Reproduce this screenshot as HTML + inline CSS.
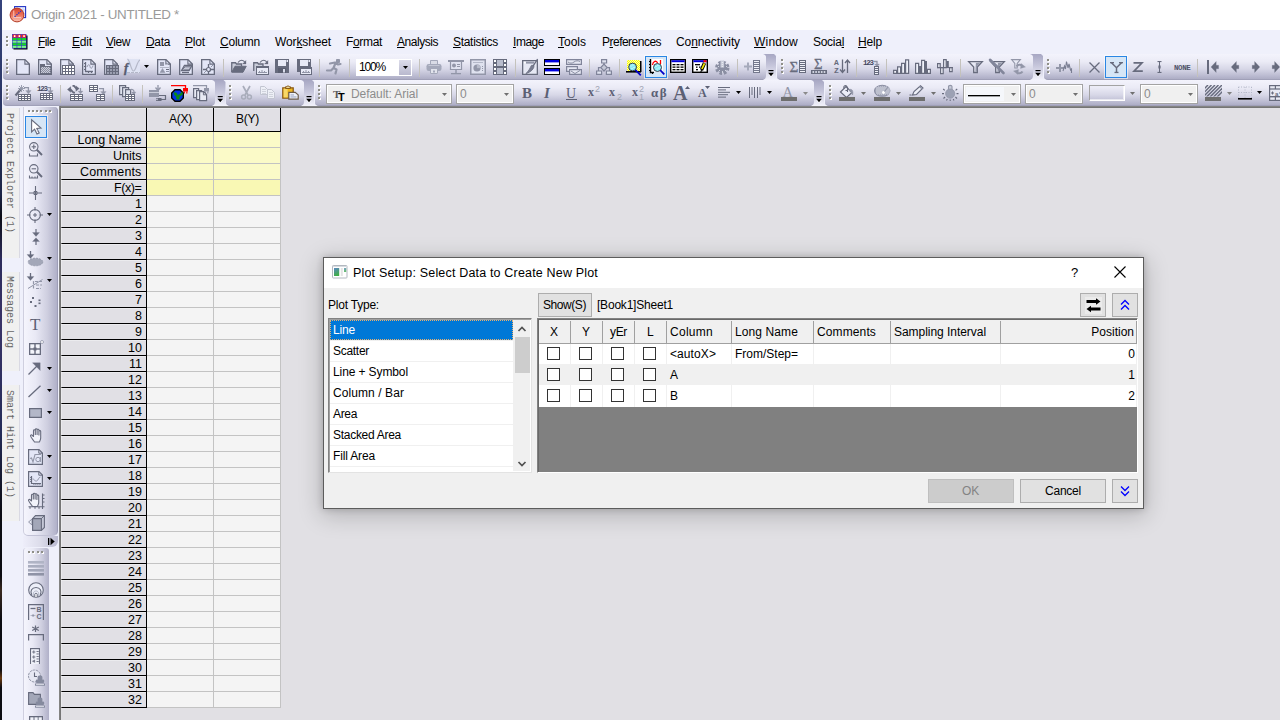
<!DOCTYPE html>
<html><head><meta charset="utf-8"><title>Origin 2021 - UNTITLED *</title>
<style>
html,body{margin:0;padding:0}
body{width:1280px;height:720px;position:relative;overflow:hidden;background:#e1e0e4;font-family:"Liberation Sans",sans-serif;font-size:12px}
div{position:absolute;box-sizing:border-box}
svg{position:absolute;overflow:visible}
.t{position:absolute;white-space:pre;line-height:normal}
u{text-decoration:underline;text-underline-offset:1px}
.tb{background:linear-gradient(#f3f3fc 0%,#ebebf6 30%,#d7d7e7 60%,#babad0 88%,#adadc5 100%);border-bottom:1px solid #a0a0b8}
.vtb{background:linear-gradient(90deg,#f5f5fd 0%,#e9e9f5 35%,#cfcfe0 70%,#b0b0c8 100%)}
.sep{width:1px;background:#b9b9c9;box-shadow:1px 0 0 #f4f4fb}
.combo{background:#f4f4f4;border:1px solid #b4b4c4;box-shadow:inset 1px 1px 0 #fff, 0 0 0 1px #e8e8f2}
</style></head>
<body>
<div style="left:0px;top:0px;width:1280px;height:30px;background:#fff"></div>
<div style="left:0px;top:30px;width:1280px;height:24px;background:#eff0fb"></div>
<div style="left:0px;top:54px;width:1280px;height:53px;background:#eff0fb"></div>
<div style="left:0px;top:107px;width:60px;height:613px;background:#eff0fb"></div>
<div style="left:0px;top:0px;width:2px;height:720px;background:linear-gradient(#36447c 0%,#2b3766 14%,#1c2546 27%,#0b0c14 30%,#2d2c5c 36%,#3a3468 45%,#242c58 60%,#0c0c12 71%,#0c0c12 80%,#3a2a20 82%,#0c0c12 86%,#0c0c12 93%,#6a3a10 94.2%,#0c0c12 95.5%,#0c0c12 100%)"></div>
<svg style="left:9px;top:5px" width="18" height="18" viewBox="0 0 18 18"><defs><linearGradient id="ag" x1="0" y1="0" x2="0" y2="1"><stop offset="0" stop-color="#d8402a"/><stop offset="0.55" stop-color="#ee7a62"/><stop offset="1" stop-color="#fbc6b8"/></linearGradient></defs><rect x="5.6" y="1.6" width="11" height="11" fill="#eef2ff" stroke="#2233c4" stroke-width="1.1"/><path d="M8 2 V12 M11 2 V12 M14 2 V12 M6 5 H16 M6 8.5 H16" stroke="#b8c4f4" stroke-width="0.7"/><circle cx="8" cy="10" r="6.9" fill="url(#ag)" stroke="#b23a24" stroke-width="1"/><path d="M4.8 5.5 V12.6 H12" stroke="#f9c9bd" stroke-width="1" fill="none"/><path d="M5.6 11.8 L12 6" stroke="#2a34c8" stroke-width="1.3" stroke-dasharray="1.4 1.1" fill="none"/></svg>
<svg style="left:12px;top:34px" width="16" height="16" viewBox="0 0 16 16"><rect x="1.5" y="1.5" width="14" height="14" fill="#000"/><rect x="0" y="0" width="14.5" height="14.5" fill="#3a46c8"/><rect x="0.6" y="0.6" width="4" height="2.9" fill="#ff2020"/><rect x="1.9" y="1.2" width="1.5" height="1.8" fill="#fff"/><rect x="5.3" y="0.6" width="4" height="2.9" fill="#ff2020"/><rect x="6.6" y="1.2" width="1.5" height="1.8" fill="#fff"/><rect x="10.0" y="0.6" width="4" height="2.9" fill="#ff2020"/><rect x="11.3" y="1.2" width="1.5" height="1.8" fill="#fff"/><rect x="0.6" y="4.1" width="4" height="2" fill="#10e018"/><rect x="0.6" y="6.699999999999999" width="4" height="2" fill="#7cf884"/><rect x="0.6" y="9.3" width="4" height="2" fill="#10e018"/><rect x="0.6" y="11.9" width="4" height="2" fill="#7cf884"/><rect x="5.3" y="4.1" width="4" height="2" fill="#10e018"/><rect x="5.3" y="6.699999999999999" width="4" height="2" fill="#7cf884"/><rect x="5.3" y="9.3" width="4" height="2" fill="#10e018"/><rect x="5.3" y="11.9" width="4" height="2" fill="#7cf884"/><rect x="10.0" y="4.1" width="4" height="2" fill="#10e018"/><rect x="10.0" y="6.699999999999999" width="4" height="2" fill="#7cf884"/><rect x="10.0" y="9.3" width="4" height="2" fill="#10e018"/><rect x="10.0" y="11.9" width="4" height="2" fill="#7cf884"/></svg>
<svg style="left:6px;top:36px" width="3" height="12" viewBox="0 0 3 12" shape-rendering="crispEdges"><rect x="1" y="1" width="2" height="2" fill="#fff"/><rect x="0" y="0" width="2" height="2" fill="#8f8f88"/><rect x="1" y="5" width="2" height="2" fill="#fff"/><rect x="0" y="4" width="2" height="2" fill="#8f8f88"/><rect x="1" y="9" width="2" height="2" fill="#fff"/><rect x="0" y="8" width="2" height="2" fill="#8f8f88"/></svg>
<span class="t" style="left:31px;top:7px;font-size:13.4px;color:#9a9a9a;letter-spacing:-0.314px;">Origin 2021 - UNTITLED *</span>
<span class="t" style="left:38px;top:35px;font-size:12px;color:#000;letter-spacing:-0.586px;"><u>F</u>ile</span>
<span class="t" style="left:72px;top:35px;font-size:12px;color:#000;letter-spacing:-0.172px;"><u>E</u>dit</span>
<span class="t" style="left:106px;top:35px;font-size:12px;color:#000;letter-spacing:-0.449px;"><u>V</u>iew</span>
<span class="t" style="left:146px;top:35px;font-size:12px;color:#000;letter-spacing:-0.34px;"><u>D</u>ata</span>
<span class="t" style="left:185px;top:35px;font-size:12px;color:#000;letter-spacing:-0.172px;"><u>P</u>lot</span>
<span class="t" style="left:220px;top:35px;font-size:12px;color:#000;letter-spacing:-0.227px;"><u>C</u>olumn</span>
<span class="t" style="left:275px;top:35px;font-size:12px;color:#000;letter-spacing:-0.127px;">Wor<u>k</u>sheet</span>
<span class="t" style="left:346px;top:35px;font-size:12px;color:#000;letter-spacing:-0.336px;">F<u>o</u>rmat</span>
<span class="t" style="left:397px;top:35px;font-size:12px;color:#000;letter-spacing:-0.461px;"><u>A</u>nalysis</span>
<span class="t" style="left:453px;top:35px;font-size:12px;color:#000;letter-spacing:-0.302px;"><u>S</u>tatistics</span>
<span class="t" style="left:513px;top:35px;font-size:12px;color:#000;letter-spacing:-0.472px;"><u>I</u>mage</span>
<span class="t" style="left:558px;top:35px;font-size:12px;color:#000;letter-spacing:-0.003px;"><u>T</u>ools</span>
<span class="t" style="left:602px;top:35px;font-size:12px;color:#000;letter-spacing:-0.518px;">P<u>r</u>eferences</span>
<span class="t" style="left:676px;top:35px;font-size:12px;color:#000;letter-spacing:-0.115px;">Co<u>n</u>nectivity</span>
<span class="t" style="left:754px;top:35px;font-size:12px;color:#000;letter-spacing:0.219px;"><u>W</u>indow</span>
<span class="t" style="left:813px;top:35px;font-size:12px;color:#000;letter-spacing:-0.281px;">Socia<u>l</u></span>
<span class="t" style="left:858px;top:35px;font-size:12px;color:#000;letter-spacing:-0.172px;"><u>H</u>elp</span>
<div class="tb" style="left:3px;top:54px;width:763px;height:26px;border-radius:0 0 3px 4px"></div>
<div class="tb" style="left:777px;top:54px;width:256px;height:26px;border-radius:0 0 3px 4px"></div>
<div class="tb" style="left:1044px;top:54px;width:246px;height:26px;border-radius:0 0 0 4px"></div>
<div class="tb" style="left:3px;top:80px;width:211.5px;height:26px;border-radius:0 0 3px 4px"></div>
<div class="tb" style="left:225.5px;top:80px;width:78.5px;height:26px;border-radius:0 0 3px 4px"></div>
<div class="tb" style="left:315px;top:80px;width:499px;height:26px;border-radius:0 0 3px 4px"></div>
<div class="tb" style="left:825px;top:80px;width:465px;height:26px;border-radius:0 0 0 4px"></div>
<svg style="left:6px;top:59px" width="3" height="16" viewBox="0 0 3 16" shape-rendering="crispEdges"><rect x="1" y="1" width="2" height="2" fill="#fff"/><rect x="0" y="0" width="2" height="2" fill="#8f8f88"/><rect x="1" y="5" width="2" height="2" fill="#fff"/><rect x="0" y="4" width="2" height="2" fill="#8f8f88"/><rect x="1" y="9" width="2" height="2" fill="#fff"/><rect x="0" y="8" width="2" height="2" fill="#8f8f88"/><rect x="1" y="13" width="2" height="2" fill="#fff"/><rect x="0" y="12" width="2" height="2" fill="#8f8f88"/></svg>
<svg style="left:16px;top:59px" width="14" height="16" viewBox="0 0 14 16"><path d="M0.65 0.65 H9 L13.35 5 V15.35 H0.65 Z" stroke="#676b7d" fill="#e3e6f7" stroke-width="1.3"/><path d="M8.9 0.9 V5.1 H13.1" stroke="#676b7d" fill="none" stroke-width="1.1"/></svg>
<svg style="left:38px;top:59px" width="14" height="16" viewBox="0 0 14 16"><path d="M0.65 0.65 H9 L13.35 5 V15.35 H0.65 Z" stroke="#676b7d" fill="#e3e6f7" stroke-width="1.3"/><path d="M8.9 0.9 V5.1 H13.1" stroke="#676b7d" fill="none" stroke-width="1.1"/><rect x="2" y="7" width="11" height="8" fill="#676b7d"/><rect x="2" y="5" width="5" height="2" fill="#676b7d"/><rect x="3" y="8" width="9" height="6" fill="#c9ccd9"/><rect x="3" y="8" width="1" height="1" fill="#8d90a2"/><rect x="5" y="8" width="1" height="1" fill="#8d90a2"/><rect x="7" y="8" width="1" height="1" fill="#8d90a2"/><rect x="9" y="8" width="1" height="1" fill="#8d90a2"/><rect x="11" y="8" width="1" height="1" fill="#8d90a2"/><rect x="4" y="9" width="1" height="1" fill="#8d90a2"/><rect x="6" y="9" width="1" height="1" fill="#8d90a2"/><rect x="8" y="9" width="1" height="1" fill="#8d90a2"/><rect x="10" y="9" width="1" height="1" fill="#8d90a2"/><rect x="12" y="9" width="1" height="1" fill="#8d90a2"/><rect x="3" y="10" width="1" height="1" fill="#8d90a2"/><rect x="5" y="10" width="1" height="1" fill="#8d90a2"/><rect x="7" y="10" width="1" height="1" fill="#8d90a2"/><rect x="9" y="10" width="1" height="1" fill="#8d90a2"/><rect x="11" y="10" width="1" height="1" fill="#8d90a2"/><rect x="4" y="11" width="1" height="1" fill="#8d90a2"/><rect x="6" y="11" width="1" height="1" fill="#8d90a2"/><rect x="8" y="11" width="1" height="1" fill="#8d90a2"/><rect x="10" y="11" width="1" height="1" fill="#8d90a2"/><rect x="12" y="11" width="1" height="1" fill="#8d90a2"/><rect x="3" y="12" width="1" height="1" fill="#8d90a2"/><rect x="5" y="12" width="1" height="1" fill="#8d90a2"/><rect x="7" y="12" width="1" height="1" fill="#8d90a2"/><rect x="9" y="12" width="1" height="1" fill="#8d90a2"/><rect x="11" y="12" width="1" height="1" fill="#8d90a2"/><rect x="4" y="13" width="1" height="1" fill="#8d90a2"/><rect x="6" y="13" width="1" height="1" fill="#8d90a2"/><rect x="8" y="13" width="1" height="1" fill="#8d90a2"/><rect x="10" y="13" width="1" height="1" fill="#8d90a2"/><rect x="12" y="13" width="1" height="1" fill="#8d90a2"/></svg>
<svg style="left:60px;top:59px" width="14" height="16" viewBox="0 0 14 16"><path d="M0.65 0.65 H9 L13.35 5 V15.35 H0.65 Z" stroke="#676b7d" fill="#e3e6f7" stroke-width="1.3"/><path d="M8.9 0.9 V5.1 H13.1" stroke="#676b7d" fill="none" stroke-width="1.1"/><rect x="2" y="6" width="13" height="10" fill="#676b7d"/><rect x="3" y="7" width="2" height="2" fill="#fff"/><rect x="3" y="10" width="2" height="2" fill="#fff"/><rect x="3" y="13" width="2" height="2" fill="#fff"/><rect x="6" y="7" width="2" height="2" fill="#fff"/><rect x="6" y="10" width="2" height="2" fill="#fff"/><rect x="6" y="13" width="2" height="2" fill="#fff"/><rect x="9" y="7" width="2" height="2" fill="#fff"/><rect x="9" y="10" width="2" height="2" fill="#fff"/><rect x="9" y="13" width="2" height="2" fill="#fff"/><rect x="12" y="7" width="2" height="2" fill="#fff"/><rect x="12" y="10" width="2" height="2" fill="#fff"/><rect x="12" y="13" width="2" height="2" fill="#fff"/></svg>
<svg style="left:82px;top:59px" width="14" height="16" viewBox="0 0 14 16"><path d="M0.65 0.65 H9 L13.35 5 V15.35 H0.65 Z" stroke="#676b7d" fill="#e3e6f7" stroke-width="1.3"/><path d="M8.9 0.9 V5.1 H13.1" stroke="#676b7d" fill="none" stroke-width="1.1"/><path d="M3.5 3 V12.5 H11" stroke="#676b7d" fill="none" stroke-width="1.3"/><rect x="2" y="4" width="2" height="1" fill="#676b7d"/><rect x="2" y="7" width="2" height="1" fill="#676b7d"/><rect x="2" y="10" width="2" height="1" fill="#676b7d"/><rect x="6" y="12" width="1" height="2" fill="#676b7d"/><rect x="9" y="12" width="1" height="2" fill="#676b7d"/><path d="M5 8 C6 5,7.5 5,8 7.5 S10 10,11 6.5" stroke="#9296a8" fill="none" stroke-width="1"/></svg>
<svg style="left:104px;top:59px" width="14" height="16" viewBox="0 0 14 16"><path d="M0.65 0.65 H9 L13.35 5 V15.35 H0.65 Z" stroke="#676b7d" fill="#e3e6f7" stroke-width="1.3"/><path d="M8.9 0.9 V5.1 H13.1" stroke="#676b7d" fill="none" stroke-width="1.1"/><rect x="2" y="6" width="13" height="10" fill="#676b7d"/><rect x="3" y="7" width="2" height="2" fill="#9a9eb0"/><rect x="3" y="10" width="2" height="2" fill="#9a9eb0"/><rect x="3" y="13" width="2" height="2" fill="#9a9eb0"/><rect x="6" y="7" width="2" height="2" fill="#9a9eb0"/><rect x="6" y="10" width="2" height="2" fill="#9a9eb0"/><rect x="6" y="13" width="2" height="2" fill="#9a9eb0"/><rect x="9" y="7" width="2" height="2" fill="#9a9eb0"/><rect x="9" y="10" width="2" height="2" fill="#9a9eb0"/><rect x="9" y="13" width="2" height="2" fill="#9a9eb0"/><rect x="12" y="7" width="2" height="2" fill="#9a9eb0"/><rect x="12" y="10" width="2" height="2" fill="#9a9eb0"/><rect x="12" y="13" width="2" height="2" fill="#9a9eb0"/></svg>
<svg style="left:124px;top:59px" width="26" height="16" viewBox="0 0 26 16"><rect x="3" y="0" width="13" height="14" fill="#dfe3f3"/><path d="M3.5 0 C6 1,7 12,9.5 12 S13 2,16 1" stroke="#b4b8c8" fill="none" stroke-width="1.2"/><path d="M3 13.5 H16" stroke="#b4b8c8" fill="none" stroke-width="1" stroke-dasharray="3 1"/><text x="0" y="13" font-family="'Liberation Serif',serif" font-style="italic" font-weight="700" font-size="12.5" fill="#565a6e" stroke="#565a6e" stroke-width="0.35">f</text><path d="M20 6 h5 l-2.5 3 z" fill="#000"/></svg>
<svg style="left:157px;top:59px" width="14" height="16" viewBox="0 0 14 16"><path d="M0.65 0.65 H9 L13.35 5 V15.35 H0.65 Z" stroke="#676b7d" fill="#e3e6f7" stroke-width="1.3"/><path d="M8.9 0.9 V5.1 H13.1" stroke="#676b7d" fill="none" stroke-width="1.1"/><rect x="3" y="3" width="4" height="4" fill="#9296a8"/><rect x="3" y="8" width="9" height="1" fill="#b4b8c8"/><path d="M3 13.5 L5.5 9.5 L8 13.5 Z" stroke="#9296a8" fill="#9296a8" stroke-width="0.5"/><rect x="9" y="10" width="3" height="1" fill="#676b7d"/><rect x="9" y="12" width="3" height="1" fill="#9296a8"/><rect x="8" y="5" width="3" height="1" fill="#b4b8c8"/></svg>
<svg style="left:179px;top:59px" width="14" height="16" viewBox="0 0 14 16"><path d="M0.65 0.65 H9 L13.35 5 V15.35 H0.65 Z" stroke="#676b7d" fill="#e3e6f7" stroke-width="1.3"/><path d="M8.9 0.9 V5.1 H13.1" stroke="#676b7d" fill="none" stroke-width="1.1"/><path d="M2.5 11.5 L5.5 6.5 H13 L10 11.5 Z" stroke="#676b7d" fill="#c5c8d8" stroke-width="1.3"/><path d="M4 10 L6.2 7.8 H11.5 M4.5 11 h6" stroke="#676b7d" fill="none" stroke-width="0.8"/><path d="M3 13.5 H10" stroke="#676b7d" fill="none" stroke-width="1.2"/></svg>
<svg style="left:201px;top:59px" width="14" height="16" viewBox="0 0 14 16"><path d="M0.65 0.65 H9 L13.35 5 V15.35 H0.65 Z" stroke="#676b7d" fill="#e3e6f7" stroke-width="1.3"/><path d="M8.9 0.9 V5.1 H13.1" stroke="#676b7d" fill="none" stroke-width="1.1"/><path d="M7.5 5 V15 M2 10.5 H13" stroke="#676b7d" fill="none" stroke-width="1.3"/><circle cx="7.5" cy="10.5" r="2" fill="#e3e6f7" stroke="#676b7d" stroke-width="1.2"/><path d="M3 14 L5 12 M10 8 L12 6" stroke="#9296a8" fill="none" stroke-width="1"/></svg>
<div style="left:223px;top:59px;width:1px;height:18px;background:#c4c2bc"></div>
<svg style="left:231px;top:59px" width="16" height="14" viewBox="0 0 16 14"><path d="M7 3.5 C9 0.5,12.5 0.5,14 3.5" stroke="#676b7d" fill="none" stroke-width="1.2"/><path d="M15 1.5 V5 H11.5 Z" stroke="#676b7d" fill="#676b7d" stroke-width="0.3"/><path d="M0.75 13 V3.75 H4.5 L5.5 5 H10.5 V7" stroke="#676b7d" fill="#c9ccd9" stroke-width="1.3"/><path d="M0.75 13.25 L4 7.25 H15.25 L12 13.25 Z" stroke="#676b7d" fill="#676b7d" stroke-width="1"/></svg>
<svg style="left:253px;top:59px" width="16" height="16" viewBox="0 0 16 16"><path d="M7 3.5 C9 0.5,12.5 0.5,14 3.5" stroke="#676b7d" fill="none" stroke-width="1.2"/><path d="M15 1.5 V5 H11.5 Z" stroke="#676b7d" fill="#676b7d" stroke-width="0.3"/><path d="M0.75 12 V3.75 H4.5 L5.5 5 H10 V7" stroke="#676b7d" fill="#c9ccd9" stroke-width="1.3"/><rect x="3" y="7" width="13" height="9" fill="#676b7d"/><rect x="4" y="9" width="11" height="6" fill="#e8eaf6"/><path d="M5 13.5 h9 M6.5 13 v-1 M9 13 v-2 M11.5 13 v-1" stroke="#9296a8" fill="none" stroke-width="1"/></svg>
<svg style="left:275px;top:59px" width="14" height="14" viewBox="0 0 14 14"><rect x="0" y="0" width="14" height="14" fill="#676b7d"/><rect x="3" y="1" width="8" height="6" fill="#e8eaf6"/><rect x="11.5" y="1" width="1.5" height="2" fill="#e8eaf6"/><rect x="3" y="9" width="8" height="5" fill="#5a5e70"/><rect x="8" y="10" width="2" height="3.5" fill="#d9dcea"/></svg>
<svg style="left:297px;top:59px" width="15" height="16" viewBox="0 0 15 16"><rect x="0" y="0" width="14" height="13" fill="#676b7d"/><rect x="3" y="1" width="8" height="6" fill="#e8eaf6"/><rect x="11.5" y="1" width="1.5" height="2" fill="#e8eaf6"/><rect x="3" y="8" width="12" height="8" fill="#676b7d"/><rect x="4" y="10" width="10" height="5" fill="#e8eaf6"/><path d="M5 13.5 h8 M6.5 13 v-1 M9 13 v-2 M11.5 13 v-1" stroke="#9296a8" fill="none" stroke-width="1"/></svg>
<div style="left:319px;top:59px;width:1px;height:18px;background:#c4c2bc"></div>
<svg style="left:326px;top:59px" width="16" height="15" viewBox="0 0 16 15"><path d="M10.5 0.5 h3 v3 h-3 z" stroke="#9296a8" fill="#9296a8" stroke-width="1"/><path d="M4 4.5 L9 3.5 L12 5.5 L14.5 5 M9.5 4 L7.5 9 L10.5 10.5 L9.5 14.5 M7.5 9 L5 11.5 H1" stroke="#9296a8" fill="none" stroke-width="2.2" stroke-linejoin="round" stroke-linecap="round"/></svg>
<div style="left:349px;top:59px;width:1px;height:18px;background:#c4c2bc"></div>
<div style="left:356px;top:59px;width:56px;height:17px;background:#fff"></div>
<div style="left:399px;top:60px;width:12px;height:15px;background:linear-gradient(#dcdcea,#b9b9ce)"></div>
<svg style="left:403px;top:66px" width="5" height="3" viewBox="0 0 5 3"><path d="M0 0 h5 l-2.5 3 z" fill="#000"/></svg>
<span class="t" style="left:359px;top:60px;font-size:12px;color:#000;letter-spacing:-1.176px;">100%</span>
<div style="left:419px;top:59px;width:1px;height:18px;background:#c4c2bc"></div>
<svg style="left:426px;top:60px" width="16" height="14" viewBox="0 0 16 14"><rect x="4" y="0" width="8" height="4" fill="#d9dbe6"/><path d="M4.5 4 V0.5 H11.5 V4" stroke="#a4a8ba" fill="none" stroke-width="1"/><rect x="0.5" y="4" width="15" height="7" rx="2.2" fill="#a4a8ba"/><rect x="2.5" y="5" width="11" height="1" fill="#c3c6d4"/><rect x="4" y="9" width="8" height="5" fill="#e1e3ec"/><path d="M4.5 9 V13.5 H11.5 V9" stroke="#a4a8ba" fill="none" stroke-width="1"/><rect x="7" y="10.5" width="2" height="2" fill="#a4a8ba"/></svg>
<svg style="left:448px;top:60px" width="16" height="15" viewBox="0 0 16 15"><rect x="0" y="0" width="16" height="2" fill="#9296a8"/><rect x="2" y="2" width="12" height="8" fill="#e0e3f0"/><path d="M2.5 2 V9.5 H13.5 V2" stroke="#9296a8" fill="none" stroke-width="1.2"/><circle cx="6" cy="5.5" r="2" fill="#9296a8"/><rect x="9" y="4" width="3" height="1" fill="#9296a8"/><rect x="9" y="6" width="3" height="1" fill="#9296a8"/><rect x="7.3" y="10" width="1.4" height="3" fill="#9296a8"/><rect x="3" y="13" width="10" height="1.3" fill="#9296a8"/></svg>
<svg style="left:470px;top:59px" width="16" height="16" viewBox="0 0 16 16"><rect x="0" y="0" width="16" height="16" fill="#9296a8"/><rect x="1.5" y="1.5" width="13" height="13" fill="#dfe2ef"/><rect x="3" y="3" width="10" height="1" fill="#b4b8c8"/><circle cx="7" cy="9" r="3.6" fill="#9296a8"/><path d="M7 9 V5.4 A3.6 3.6 0 0 1 10.6 9 Z" stroke="#b4b8c8" fill="#b8bccb" stroke-width="0.3"/><rect x="12" y="7" width="1" height="1" fill="#9296a8"/><rect x="12" y="9" width="1" height="1" fill="#9296a8"/><rect x="12" y="11" width="1" height="1" fill="#9296a8"/></svg>
<svg style="left:493px;top:59px" width="14" height="16" viewBox="0 0 14 16"><rect x="0" y="0" width="14" height="16" fill="#676b7d"/><rect x="4" y="1" width="6" height="6" fill="#b9bdcd"/><rect x="4" y="9" width="6" height="6" fill="#b9bdcd"/><rect x="1" y="1" width="2" height="2" fill="#fff"/><rect x="11" y="1" width="2" height="2" fill="#fff"/><rect x="1" y="5" width="2" height="2" fill="#fff"/><rect x="11" y="5" width="2" height="2" fill="#fff"/><rect x="1" y="9" width="2" height="2" fill="#fff"/><rect x="11" y="9" width="2" height="2" fill="#fff"/><rect x="1" y="13" width="2" height="2" fill="#fff"/><rect x="11" y="13" width="2" height="2" fill="#fff"/></svg>
<div style="left:515px;top:59px;width:1px;height:18px;background:#c4c2bc"></div>
<svg style="left:522px;top:59px" width="16" height="16" viewBox="0 0 16 16"><path d="M0.65 1.65 H15.35 V15.35 H0.65 Z" stroke="#676b7d" fill="#e6e8f4" stroke-width="1.3"/><rect x="4" y="2.6" width="8" height="2" fill="#9296a8"/><rect x="2" y="2.8" width="1.6" height="1.6" fill="#fff"/><path d="M15.6 0 L11 7.2" stroke="#676b7d" fill="none" stroke-width="1.3"/><path d="M11.8 6.4 C12.6 9,9.5 13,3.8 14.6 C6.5 12.5,7.8 9.5,9.4 6.4 Z" stroke="#676b7d" fill="#7a7e92" stroke-width="0.8"/></svg>
<svg style="left:544px;top:59px" width="16" height="16" viewBox="0 0 16 16"><rect x="0" y="0" width="16" height="7" fill="#000"/><rect x="1" y="1" width="14" height="5" fill="#fff"/><rect x="1" y="1" width="14" height="2.4" fill="#0000e0"/><rect x="0" y="9" width="16" height="7" fill="#000"/><rect x="1" y="10" width="14" height="5" fill="#fff"/><rect x="1" y="10" width="14" height="2.4" fill="#0000e0"/></svg>
<svg style="left:566px;top:59px" width="16" height="16" viewBox="0 0 16 16"><path d="M0.6 0.6 H15.4 V5.4 H0.6 Z" stroke="#80849a" fill="#e6e8f3" stroke-width="1.2"/><path d="M2 3 C4 4.5,6 4.5,8 3 S12 1.5,14 2.5" stroke="#80849a" fill="none" stroke-width="0.9"/><path d="M0.6 7.6 H11.4 V12.4 H0.6 Z" stroke="#80849a" fill="#e6e8f3" stroke-width="1.2"/><path d="M3.6 10.6 H15.4 V15.4 H3.6 Z" stroke="#80849a" fill="#e6e8f3" stroke-width="1.2"/><path d="M5 12 L9 14.5 L14 11.5" stroke="#80849a" fill="none" stroke-width="0.9"/></svg>
<div style="left:589px;top:59px;width:1px;height:18px;background:#c4c2bc"></div>
<svg style="left:596px;top:59px" width="16" height="16" viewBox="0 0 16 16"><path d="M5.6 0.6 h5 v3.4 h-5 z" stroke="#80849a" fill="#dfe2ef" stroke-width="1.2"/><path d="M8 4 V6" stroke="#80849a" fill="none" stroke-width="1.2"/><path d="M8 5.2 L11.2 8.6 L8 12 L4.8 8.6 Z" stroke="#80849a" fill="#c4c7d6" stroke-width="1.2"/><path d="M4.8 8.6 H2.5 V12 M11.2 8.6 H13.5 V12" stroke="#80849a" fill="none" stroke-width="1.2"/><path d="M0.6 12 h5 v3.4 h-5 z M10.4 12 h5 v3.4 h-5 z" stroke="#80849a" fill="#dfe2ef" stroke-width="1.2"/></svg>
<div style="left:619px;top:59px;width:1px;height:18px;background:#c4c2bc"></div>
<svg style="left:626px;top:60px" width="16" height="16" viewBox="0 0 16 16"><rect x="1" y="0" width="13" height="11" fill="#ffff00"/><rect x="1" y="0" width="1" height="1" fill="#ffffa8"/><rect x="3" y="0" width="1" height="1" fill="#ffffa8"/><rect x="5" y="0" width="1" height="1" fill="#ffffa8"/><rect x="7" y="0" width="1" height="1" fill="#ffffa8"/><rect x="9" y="0" width="1" height="1" fill="#ffffa8"/><rect x="11" y="0" width="1" height="1" fill="#ffffa8"/><rect x="13" y="0" width="1" height="1" fill="#ffffa8"/><rect x="2" y="1" width="1" height="1" fill="#ffffa8"/><rect x="4" y="1" width="1" height="1" fill="#ffffa8"/><rect x="6" y="1" width="1" height="1" fill="#ffffa8"/><rect x="8" y="1" width="1" height="1" fill="#ffffa8"/><rect x="10" y="1" width="1" height="1" fill="#ffffa8"/><rect x="12" y="1" width="1" height="1" fill="#ffffa8"/><rect x="14" y="1" width="1" height="1" fill="#ffffa8"/><rect x="1" y="2" width="1" height="1" fill="#ffffa8"/><rect x="3" y="2" width="1" height="1" fill="#ffffa8"/><rect x="5" y="2" width="1" height="1" fill="#ffffa8"/><rect x="7" y="2" width="1" height="1" fill="#ffffa8"/><rect x="9" y="2" width="1" height="1" fill="#ffffa8"/><rect x="11" y="2" width="1" height="1" fill="#ffffa8"/><rect x="13" y="2" width="1" height="1" fill="#ffffa8"/><rect x="2" y="3" width="1" height="1" fill="#ffffa8"/><rect x="4" y="3" width="1" height="1" fill="#ffffa8"/><rect x="6" y="3" width="1" height="1" fill="#ffffa8"/><rect x="8" y="3" width="1" height="1" fill="#ffffa8"/><rect x="10" y="3" width="1" height="1" fill="#ffffa8"/><rect x="12" y="3" width="1" height="1" fill="#ffffa8"/><rect x="14" y="3" width="1" height="1" fill="#ffffa8"/><rect x="1" y="4" width="1" height="1" fill="#ffffa8"/><rect x="3" y="4" width="1" height="1" fill="#ffffa8"/><rect x="5" y="4" width="1" height="1" fill="#ffffa8"/><rect x="7" y="4" width="1" height="1" fill="#ffffa8"/><rect x="9" y="4" width="1" height="1" fill="#ffffa8"/><rect x="11" y="4" width="1" height="1" fill="#ffffa8"/><rect x="13" y="4" width="1" height="1" fill="#ffffa8"/><rect x="2" y="5" width="1" height="1" fill="#ffffa8"/><rect x="4" y="5" width="1" height="1" fill="#ffffa8"/><rect x="6" y="5" width="1" height="1" fill="#ffffa8"/><rect x="8" y="5" width="1" height="1" fill="#ffffa8"/><rect x="10" y="5" width="1" height="1" fill="#ffffa8"/><rect x="12" y="5" width="1" height="1" fill="#ffffa8"/><rect x="14" y="5" width="1" height="1" fill="#ffffa8"/><rect x="1" y="6" width="1" height="1" fill="#ffffa8"/><rect x="3" y="6" width="1" height="1" fill="#ffffa8"/><rect x="5" y="6" width="1" height="1" fill="#ffffa8"/><rect x="7" y="6" width="1" height="1" fill="#ffffa8"/><rect x="9" y="6" width="1" height="1" fill="#ffffa8"/><rect x="11" y="6" width="1" height="1" fill="#ffffa8"/><rect x="13" y="6" width="1" height="1" fill="#ffffa8"/><rect x="2" y="7" width="1" height="1" fill="#ffffa8"/><rect x="4" y="7" width="1" height="1" fill="#ffffa8"/><rect x="6" y="7" width="1" height="1" fill="#ffffa8"/><rect x="8" y="7" width="1" height="1" fill="#ffffa8"/><rect x="10" y="7" width="1" height="1" fill="#ffffa8"/><rect x="12" y="7" width="1" height="1" fill="#ffffa8"/><rect x="14" y="7" width="1" height="1" fill="#ffffa8"/><rect x="1" y="8" width="1" height="1" fill="#ffffa8"/><rect x="3" y="8" width="1" height="1" fill="#ffffa8"/><rect x="5" y="8" width="1" height="1" fill="#ffffa8"/><rect x="7" y="8" width="1" height="1" fill="#ffffa8"/><rect x="9" y="8" width="1" height="1" fill="#ffffa8"/><rect x="11" y="8" width="1" height="1" fill="#ffffa8"/><rect x="13" y="8" width="1" height="1" fill="#ffffa8"/><rect x="2" y="9" width="1" height="1" fill="#ffffa8"/><rect x="4" y="9" width="1" height="1" fill="#ffffa8"/><rect x="6" y="9" width="1" height="1" fill="#ffffa8"/><rect x="8" y="9" width="1" height="1" fill="#ffffa8"/><rect x="10" y="9" width="1" height="1" fill="#ffffa8"/><rect x="12" y="9" width="1" height="1" fill="#ffffa8"/><rect x="14" y="9" width="1" height="1" fill="#ffffa8"/><rect x="1" y="10" width="1" height="1" fill="#ffffa8"/><rect x="3" y="10" width="1" height="1" fill="#ffffa8"/><rect x="5" y="10" width="1" height="1" fill="#ffffa8"/><rect x="7" y="10" width="1" height="1" fill="#ffffa8"/><rect x="9" y="10" width="1" height="1" fill="#ffffa8"/><rect x="11" y="10" width="1" height="1" fill="#ffffa8"/><rect x="13" y="10" width="1" height="1" fill="#ffffa8"/><rect x="0" y="11" width="15" height="1.6" fill="#000"/><rect x="14" y="1" width="1.5" height="11" fill="#000"/><circle cx="6.6" cy="7" r="3.9" fill="#8cecf4" stroke="#2a2a3a" stroke-width="0.9"/><path d="M4.5 6 h1 M6.5 5 h1 M7.5 7.5 h1 M5.5 8.5 h1" stroke="#e8fcff" stroke-width="1"/><path d="M9.3 9.8 L14.8 15.3" stroke="#0000c8" fill="none" stroke-width="1.8"/></svg>
<div style="left:645px;top:56px;width:22px;height:22px;background:#d6e6f6;border:1px solid #2a86e4;box-shadow:0 0 0 1px rgba(255,255,255,.55)"></div>
<svg style="left:649px;top:59px" width="16" height="16" viewBox="0 0 16 16"><rect x="2" y="0" width="12" height="13" fill="#fff"/><path d="M1.5 0 V13.5 H5" stroke="#000" fill="none" stroke-width="1.4"/><rect x="0" y="2" width="1.5" height="1" fill="#000"/><rect x="0" y="5" width="1.5" height="1" fill="#000"/><rect x="0" y="8" width="1.5" height="1" fill="#000"/><rect x="0" y="11" width="1.5" height="1" fill="#000"/><rect x="3" y="13" width="1" height="2" fill="#000"/><path d="M3.5 6 C4 2,7.5 1,8.5 4" stroke="#ff0000" fill="none" stroke-width="1.3"/><path d="M11.5 1 V5" stroke="#ff0000" fill="none" stroke-width="1.3"/><circle cx="8.5" cy="8.5" r="4" fill="#8cecf4" stroke="#2a2a3a" stroke-width="0.9"/><path d="M6.5 7.5 h1 M8.5 6.5 h1 M9.5 9 h1 M7.5 10 h1" stroke="#e8fcff" stroke-width="1"/><path d="M11.2 11.2 L15.3 15.3" stroke="#0000c8" fill="none" stroke-width="1.8"/></svg>
<svg style="left:670px;top:59px" width="16" height="14" viewBox="0 0 16 14"><rect x="0" y="0" width="16" height="14" fill="#000"/><rect x="1.4" y="1.2" width="13.2" height="11.4" fill="#fff"/><rect x="1.4" y="1.2" width="13.2" height="2" fill="#0000d8"/><rect x="2.5" y="5.0" width="3" height="1.3" fill="#000"/><rect x="6.5" y="5.0" width="3" height="1.3" fill="#000"/><rect x="10.5" y="5.0" width="3" height="1.3" fill="#000"/><rect x="2.5" y="7.5" width="3" height="1.3" fill="#000"/><rect x="6.5" y="7.5" width="3" height="1.3" fill="#000"/><rect x="10.5" y="7.5" width="3" height="1.3" fill="#000"/><rect x="2.5" y="10.0" width="3" height="1.3" fill="#000"/><rect x="6.5" y="10.0" width="3" height="1.3" fill="#000"/><rect x="10.5" y="10.0" width="3" height="1.3" fill="#000"/></svg>
<svg style="left:692px;top:59px" width="16" height="14" viewBox="0 0 16 14"><rect x="0" y="0" width="16" height="14" fill="#000"/><rect x="1.4" y="1.2" width="13.2" height="11.4" fill="#fff"/><rect x="1.4" y="1.2" width="13.2" height="2" fill="#0000d8"/><rect x="11.5" y="1.2" width="3" height="2" fill="#ff0000"/><rect x="3" y="5" width="5" height="1.3" fill="#000"/><rect x="4" y="7.5" width="1.5" height="1.3" fill="#000"/><rect x="7" y="7.5" width="1.5" height="1.3" fill="#000"/><rect x="4" y="10" width="2" height="1.3" fill="#000"/><path d="M12.5 4 L9.5 11" stroke="#000" fill="none" stroke-width="3.4"/><path d="M12.5 4.3 L9.9 10" stroke="#f4e800" fill="none" stroke-width="1.7"/><path d="M9.3 11 L8.6 13 L10.3 11.6 Z" stroke="#000" fill="#000" stroke-width="0.5"/></svg>
<svg style="left:714px;top:60px" width="17" height="15" viewBox="0 0 17 15"><circle cx="8.3" cy="7.8" r="5.6" fill="none" stroke="#8a8ea2" stroke-width="3.2" stroke-dasharray="2.6 1.8"/><circle cx="8.3" cy="7.8" r="5" fill="#8a8ea2"/><rect x="6.5" y="0.6" width="3.6" height="7" fill="#c9ccd9"/><rect x="7.8" y="2" width="1" height="1" fill="#eef0f6"/><rect x="7.8" y="4" width="1" height="1" fill="#eef0f6"/><rect x="7.8" y="6" width="1" height="1" fill="#eef0f6"/><rect x="4" y="6" width="1" height="1" fill="#d4d7e2"/><rect x="12" y="6" width="1" height="1" fill="#d4d7e2"/><rect x="5" y="10" width="1" height="1" fill="#d4d7e2"/><rect x="11" y="10" width="1" height="1" fill="#d4d7e2"/><rect x="8" y="11" width="1" height="2" fill="#d4d7e2"/></svg>
<div style="left:737px;top:59px;width:1px;height:18px;background:#c4c2bc"></div>
<svg style="left:744px;top:60px" width="16" height="14" viewBox="0 0 16 14"><rect x="0" y="5.5" width="8" height="2" fill="#a6aabb"/><rect x="3" y="2.5" width="2" height="8" fill="#a6aabb"/><rect x="9" y="0" width="7" height="13" fill="#74788c" shape-rendering="crispEdges"/><rect x="10" y="1" width="5" height="1" fill="#f0f1f8" shape-rendering="crispEdges"/><rect x="10" y="3" width="5" height="1" fill="#f0f1f8" shape-rendering="crispEdges"/><rect x="10" y="5" width="5" height="1" fill="#f0f1f8" shape-rendering="crispEdges"/><rect x="10" y="7" width="5" height="1" fill="#f0f1f8" shape-rendering="crispEdges"/><rect x="10" y="9" width="5" height="1" fill="#f0f1f8" shape-rendering="crispEdges"/><rect x="10" y="11" width="5" height="1" fill="#f0f1f8" shape-rendering="crispEdges"/></svg>
<svg style="left:763px;top:54px" width="16" height="26" viewBox="0 0 16 26"><defs><linearGradient id="cg766_54" x1="0" y1="0" x2="0" y2="1"><stop offset="0" stop-color="#a7a7c3"/><stop offset="0.45" stop-color="#c6c6db"/><stop offset="1" stop-color="#f2f2fb"/></linearGradient></defs><path d="M0 0 H11 L13 2 V22 C13 24,14 25,16 26 H0 C2 25,3 24,3 22 V3 C3 1.5,2 0.5,0 0 Z" fill="url(#cg766_54)"/><path d="M5.5 20 h5 l-2.5 3.6 z" fill="#fff" opacity=".8"/><rect x="5.5" y="16" width="5" height="1.2" fill="#000"/><path d="M5.2 18.8 h5.6 l-2.8 3.4 z" fill="#000"/></svg>
<svg style="left:781px;top:59px" width="3" height="16" viewBox="0 0 3 16" shape-rendering="crispEdges"><rect x="1" y="1" width="2" height="2" fill="#fff"/><rect x="0" y="0" width="2" height="2" fill="#8f8f88"/><rect x="1" y="5" width="2" height="2" fill="#fff"/><rect x="0" y="4" width="2" height="2" fill="#8f8f88"/><rect x="1" y="9" width="2" height="2" fill="#fff"/><rect x="0" y="8" width="2" height="2" fill="#8f8f88"/><rect x="1" y="13" width="2" height="2" fill="#fff"/><rect x="0" y="12" width="2" height="2" fill="#8f8f88"/></svg>
<svg style="left:790px;top:60px" width="16" height="14" viewBox="0 0 16 14"><text x="-0.5" y="11.8" font-family="'Liberation Serif',serif" font-size="15" fill="#676b7d" stroke="#676b7d" stroke-width="0.3">Σ</text><rect x="9" y="0" width="7" height="13" fill="#676b7d" shape-rendering="crispEdges"/><rect x="10" y="1" width="5" height="1" fill="#f0f1f8" shape-rendering="crispEdges"/><rect x="10" y="3" width="5" height="1" fill="#f0f1f8" shape-rendering="crispEdges"/><rect x="10" y="5" width="5" height="1" fill="#f0f1f8" shape-rendering="crispEdges"/><rect x="10" y="7" width="5" height="1" fill="#f0f1f8" shape-rendering="crispEdges"/><rect x="10" y="9" width="5" height="1" fill="#f0f1f8" shape-rendering="crispEdges"/><rect x="10" y="11" width="5" height="1" fill="#f0f1f8" shape-rendering="crispEdges"/></svg>
<svg style="left:811px;top:59px" width="16" height="15" viewBox="0 0 16 15"><text x="3" y="9.8" font-family="'Liberation Serif',serif" font-size="14.5" fill="#676b7d" stroke="#676b7d" stroke-width="0.3">Σ</text><rect x="0" y="11" width="16" height="4" fill="#676b7d"/><rect x="1.5" y="12.2" width="1.6" height="1.6" fill="#eceef8"/><rect x="4.3" y="12.2" width="1.6" height="1.6" fill="#eceef8"/><rect x="7.1" y="12.2" width="1.6" height="1.6" fill="#eceef8"/><rect x="9.899999999999999" y="12.2" width="1.6" height="1.6" fill="#eceef8"/><rect x="12.7" y="12.2" width="1.6" height="1.6" fill="#eceef8"/></svg>
<svg style="left:834px;top:59px" width="16" height="15" viewBox="0 0 16 15"><text x="0" y="6" font-family="'Liberation Mono',monospace" font-weight="700" font-size="8" fill="#676b7d">A</text><text x="0" y="14" font-family="'Liberation Mono',monospace" font-weight="700" font-size="8" fill="#676b7d">Z</text><path d="M8.5 0.5 V13 M6 10.5 L8.5 13.5 L11 10.5" stroke="#676b7d" fill="none" stroke-width="1.3"/><path d="M13.5 14 V1.5 M11 4 L13.5 1 L16 4" stroke="#676b7d" fill="none" stroke-width="1.3"/></svg>
<div style="left:856px;top:59px;width:1px;height:18px;background:#c4c2bc"></div>
<svg style="left:863px;top:59px" width="17" height="15" viewBox="0 0 17 15"><text x="0" y="5.5" font-family="'Liberation Mono',monospace" font-weight="700" font-size="7.5" fill="#444860" letter-spacing="-1.2">123</text><path d="M10.5 2.5 H14 V6" stroke="#9296a8" fill="none" stroke-width="1.3"/><path d="M11.5 5 H16.5 L14 8 Z" stroke="#9296a8" fill="#9296a8" stroke-width="0.2"/><rect x="11" y="7" width="5" height="9" fill="#676b7d" shape-rendering="crispEdges"/><rect x="12" y="8" width="3" height="1" fill="#f0f1f8" shape-rendering="crispEdges"/><rect x="12" y="10" width="3" height="1" fill="#f0f1f8" shape-rendering="crispEdges"/><rect x="12" y="12" width="3" height="1" fill="#f0f1f8" shape-rendering="crispEdges"/><rect x="12" y="14" width="3" height="1" fill="#f0f1f8" shape-rendering="crispEdges"/></svg>
<div style="left:886px;top:59px;width:1px;height:18px;background:#c4c2bc"></div>
<svg style="left:893px;top:59px" width="16" height="15" viewBox="0 0 16 15"><path d="M0.6 14.4 V11.4 h3 V14.4 Z" stroke="#676b7d" fill="#f0f2fa" stroke-width="1.2"/><path d="M4.6 14.4 V7.9 h3 V14.4 Z" stroke="#676b7d" fill="#f0f2fa" stroke-width="1.2"/><path d="M8.6 14.4 V4.4 h3 V14.4 Z" stroke="#676b7d" fill="#f0f2fa" stroke-width="1.2"/><path d="M12.6 14.4 V0.9000000000000004 h3 V14.4 Z" stroke="#676b7d" fill="#f0f2fa" stroke-width="1.2"/></svg>
<svg style="left:915px;top:59px" width="16" height="15" viewBox="0 0 16 15"><path d="M0.6 14.4 V4.4 h3 V14.4 Z" stroke="#676b7d" fill="#f0f2fa" stroke-width="1.2"/><rect x="3.6" y="7" width="2.4" height="8" fill="#676b7d"/><path d="M6.6 14.4 V1.4 h3 V14.4 Z" stroke="#676b7d" fill="#f0f2fa" stroke-width="1.2"/><rect x="9.6" y="2" width="2.4" height="13" fill="#676b7d"/><path d="M12.4 14.4 V10.4 h3 V14.4 Z" stroke="#676b7d" fill="#f0f2fa" stroke-width="1.2"/></svg>
<svg style="left:937px;top:59px" width="16" height="15" viewBox="0 0 16 15"><path d="M0.6 4.6 h2.6 v4 h-2.6 z" stroke="#676b7d" fill="#f0f2fa" stroke-width="1.2"/><path d="M3.6 8.6 h2.6 v6 h-2.6 z" stroke="#676b7d" fill="#f0f2fa" stroke-width="1.2"/><path d="M6.6 0.6 h2.6 v8 h-2.6 z" stroke="#676b7d" fill="#f0f2fa" stroke-width="1.2"/><rect x="9.4" y="2" width="2.4" height="7" fill="#676b7d"/><path d="M12.6 8.6 h2.6 v4 h-2.6 z" stroke="#676b7d" fill="#f0f2fa" stroke-width="1.2"/><path d="M0 8.6 H16" stroke="#676b7d" fill="none" stroke-width="1"/></svg>
<div style="left:960px;top:59px;width:1px;height:18px;background:#c4c2bc"></div>
<svg style="left:968px;top:61px" width="15" height="13" viewBox="0 0 15 13"><path d="M0.7 0.7 H14.3 L9.3 6 V11.5 H5.7 V6 Z" stroke="#676b7d" fill="#e8eaf5" stroke-width="1.3"/><path d="M8 2 L12.5 1.5 L9 5.5 V10.5 H7.5 Z" stroke="#9296a8" fill="#9296a8" stroke-width="0.2"/></svg>
<svg style="left:989px;top:59px" width="16" height="15" viewBox="0 0 16 15"><g transform="translate(1,2)"><path d="M0.7 0.7 H14.3 L9.3 6 V11.5 H5.7 V6 Z" stroke="#676b7d" fill="#e8eaf5" stroke-width="1.3"/><path d="M8 2 L12.5 1.5 L9 5.5 V10.5 H7.5 Z" stroke="#9296a8" fill="#9296a8" stroke-width="0.2"/></g><path d="M1 0.8 L14.5 14" stroke="#82869b" fill="none" stroke-width="2.6" stroke-linecap="round"/></svg>
<svg style="left:1011px;top:59px" width="16" height="16" viewBox="0 0 16 16"><path d="M0.6 0.6 H9.4 L6.2 4.5 V9 H3.8 V4.5 Z" stroke="#9296a8" fill="#e8eaf5" stroke-width="1.1"/><path d="M5.5 7.5 C6.5 5.5,10 5,11.5 7" stroke="#9296a8" fill="none" stroke-width="2"/><path d="M10 4.5 L14.5 8 L9.5 9.5 Z" stroke="#9296a8" fill="#9296a8" stroke-width="0.3"/><path d="M11.5 12.5 C10.5 14.5,7 15,5.5 13" stroke="#9296a8" fill="none" stroke-width="2"/><path d="M7 15.5 L2.5 12 L7.5 10.5 Z" stroke="#9296a8" fill="#9296a8" stroke-width="0.3"/></svg>
<svg style="left:1030px;top:54px" width="16" height="26" viewBox="0 0 16 26"><defs><linearGradient id="cg1033_54" x1="0" y1="0" x2="0" y2="1"><stop offset="0" stop-color="#a7a7c3"/><stop offset="0.45" stop-color="#c6c6db"/><stop offset="1" stop-color="#f2f2fb"/></linearGradient></defs><path d="M0 0 H11 L13 2 V22 C13 24,14 25,16 26 H0 C2 25,3 24,3 22 V3 C3 1.5,2 0.5,0 0 Z" fill="url(#cg1033_54)"/><path d="M5.5 20 h5 l-2.5 3.6 z" fill="#fff" opacity=".8"/><rect x="5.5" y="16" width="5" height="1.2" fill="#000"/><path d="M5.2 18.8 h5.6 l-2.8 3.4 z" fill="#000"/></svg>
<svg style="left:1047px;top:59px" width="3" height="16" viewBox="0 0 3 16" shape-rendering="crispEdges"><rect x="1" y="1" width="2" height="2" fill="#fff"/><rect x="0" y="0" width="2" height="2" fill="#8f8f88"/><rect x="1" y="5" width="2" height="2" fill="#fff"/><rect x="0" y="4" width="2" height="2" fill="#8f8f88"/><rect x="1" y="9" width="2" height="2" fill="#fff"/><rect x="0" y="8" width="2" height="2" fill="#8f8f88"/><rect x="1" y="13" width="2" height="2" fill="#fff"/><rect x="0" y="12" width="2" height="2" fill="#8f8f88"/></svg>
<svg style="left:1056px;top:61px" width="17" height="13" viewBox="0 0 17 13"><rect x="0" y="6" width="8" height="2" fill="#9296a8"/><rect x="3" y="3" width="2" height="8" fill="#9296a8"/><path d="M7 10 L8.5 5 L9.5 8 L10.5 0.5 L12 7 L13 3 L14.5 9 L15.5 8 V12" stroke="#7a7e92" fill="none" stroke-width="1.1"/></svg>
<div style="left:1079px;top:59px;width:1px;height:18px;background:#c4c2bc"></div>
<svg style="left:1089px;top:62px" width="11" height="11" viewBox="0 0 11 11"><path d="M0.5 0.5 L10.5 10.5 M10.5 0.5 L0.5 10.5" stroke="#676b7d" fill="none" stroke-width="1.3"/></svg>
<div style="left:1105px;top:56px;width:22px;height:22px;background:#d6e6f6;border:1px solid #2a86e4;box-shadow:0 0 0 1px rgba(255,255,255,.55)"></div>
<svg style="left:1110px;top:62px" width="13" height="11" viewBox="0 0 13 11"><path d="M1.5 0.7 L6.5 5.8 L11.5 0.7 M6.5 5.8 V10.3" stroke="#676b7d" fill="none" stroke-width="1.5"/><rect x="0" y="0" width="4" height="1.3" fill="#676b7d"/><rect x="9" y="0" width="4" height="1.3" fill="#676b7d"/><rect x="4.5" y="9.8" width="4" height="1.3" fill="#676b7d"/></svg>
<svg style="left:1133px;top:62px" width="10" height="10" viewBox="0 0 10 10"><path d="M0.5 0.8 H9 L1 9.2 H9.8" stroke="#676b7d" fill="none" stroke-width="1.7" stroke-linejoin="miter"/></svg>
<svg style="left:1157px;top:61px" width="5" height="12" viewBox="0 0 5 12"><rect x="0.5" y="0" width="4" height="1.1" fill="#676b7d"/><rect x="0.5" y="10.9" width="4" height="1.1" fill="#676b7d"/><rect x="2" y="0" width="1" height="12" fill="#676b7d"/><rect x="1.4" y="4.5" width="2.2" height="3" fill="#676b7d"/></svg>
<span class="t" style="left:1174px;top:63.5px;font-size:7.5px;color:#50546a;font-family:'Liberation Mono', monospace;font-weight:700;letter-spacing:-0.379px;">NONE</span>
<div style="left:1197px;top:59px;width:1px;height:18px;background:#c4c2bc"></div>
<svg style="left:1207px;top:60px" width="12" height="14" viewBox="0 0 12 14"><rect x="0" y="0" width="2" height="14" fill="#676b7d"/><path d="M4 7 L9.2 1.4 V5.2 H11.6 V8.8 H9.2 V12.6 Z" stroke="#676b7d" fill="#676b7d" stroke-width="0.2"/></svg>
<svg style="left:1231px;top:61px" width="8" height="12" viewBox="0 0 8 12"><path d="M0.2 6 L5.4 0.4 V4.2 H7.8 V7.8 H5.4 V11.6 Z" stroke="#676b7d" fill="#676b7d" stroke-width="0.2"/></svg>
<svg style="left:1252px;top:61px" width="8" height="12" viewBox="0 0 8 12"><path d="M7.8 6 L2.6 0.4 V4.2 H0.2 V7.8 H2.6 V11.6 Z" stroke="#676b7d" fill="#676b7d" stroke-width="0.2"/></svg>
<svg style="left:1272px;top:61px" width="8" height="12" viewBox="0 0 8 12"><path d="M7.8 6 L2.6 0.4 V4.2 H0.2 V7.8 H2.6 V11.6 Z" stroke="#676b7d" fill="#676b7d" stroke-width="0.2"/></svg>
<svg style="left:6px;top:85px" width="3" height="16" viewBox="0 0 3 16" shape-rendering="crispEdges"><rect x="1" y="1" width="2" height="2" fill="#fff"/><rect x="0" y="0" width="2" height="2" fill="#8f8f88"/><rect x="1" y="5" width="2" height="2" fill="#fff"/><rect x="0" y="4" width="2" height="2" fill="#8f8f88"/><rect x="1" y="9" width="2" height="2" fill="#fff"/><rect x="0" y="8" width="2" height="2" fill="#8f8f88"/><rect x="1" y="13" width="2" height="2" fill="#fff"/><rect x="0" y="12" width="2" height="2" fill="#8f8f88"/></svg>
<svg style="left:15px;top:85px" width="17" height="16" viewBox="0 0 17 16"><path d="M0.5 10.5 L6 4" stroke="#676b7d" fill="none" stroke-width="2.2"/><path d="M6.5 0 V7 M3 3.5 H10 M4 1 L9 6 M9 1 L4 6" stroke="#9296a8" fill="none" stroke-width="0.9"/><path d="M9 2.6 H13.4 V6" stroke="#9296a8" fill="none" stroke-width="1.3"/><path d="M10.6 5.5 H16.2 L13.4 9 Z" stroke="#9296a8" fill="#9296a8" stroke-width="0.2"/><rect x="3" y="9" width="13" height="7" fill="#676b7d"/><rect x="4" y="10" width="2" height="1" fill="#fff"/><rect x="4" y="12" width="2" height="1" fill="#fff"/><rect x="4" y="14" width="2" height="1" fill="#fff"/><rect x="7" y="10" width="2" height="1" fill="#fff"/><rect x="7" y="12" width="2" height="1" fill="#fff"/><rect x="7" y="14" width="2" height="1" fill="#fff"/><rect x="10" y="10" width="2" height="1" fill="#fff"/><rect x="10" y="12" width="2" height="1" fill="#fff"/><rect x="10" y="14" width="2" height="1" fill="#fff"/><rect x="13" y="10" width="2" height="1" fill="#fff"/><rect x="13" y="12" width="2" height="1" fill="#fff"/><rect x="13" y="14" width="2" height="1" fill="#fff"/></svg>
<svg style="left:37px;top:85px" width="17" height="16" viewBox="0 0 17 16"><text x="0" y="5.5" font-family="'Liberation Mono',monospace" font-weight="700" font-size="7.5" fill="#444860" letter-spacing="-1.2">123</text><path d="M9 2.6 H13.4 V6" stroke="#9296a8" fill="none" stroke-width="1.3"/><path d="M10.6 5.5 H16.2 L13.4 9 Z" stroke="#9296a8" fill="#9296a8" stroke-width="0.2"/><rect x="3" y="8" width="13" height="7" fill="#676b7d"/><rect x="4" y="9" width="2" height="1" fill="#fff"/><rect x="4" y="11" width="2" height="1" fill="#fff"/><rect x="4" y="13" width="2" height="1" fill="#fff"/><rect x="7" y="9" width="2" height="1" fill="#fff"/><rect x="7" y="11" width="2" height="1" fill="#fff"/><rect x="7" y="13" width="2" height="1" fill="#fff"/><rect x="10" y="9" width="2" height="1" fill="#fff"/><rect x="10" y="11" width="2" height="1" fill="#fff"/><rect x="10" y="13" width="2" height="1" fill="#fff"/><rect x="13" y="9" width="2" height="1" fill="#fff"/><rect x="13" y="11" width="2" height="1" fill="#fff"/><rect x="13" y="13" width="2" height="1" fill="#fff"/></svg>
<div style="left:60px;top:85px;width:1px;height:18px;background:#c4c2bc"></div>
<svg style="left:67px;top:85px" width="17" height="16" viewBox="0 0 17 16"><path d="M0.3 4.5 L3.8 1.6 V7.4 Z" stroke="#676b7d" fill="#676b7d" stroke-width="0.2"/><path d="M3 4 L6.5 7.6 H8" stroke="#676b7d" fill="none" stroke-width="1.8"/><path d="M12.3 3.6 L8.8 0.7 V6.5 Z" stroke="#676b7d" fill="#676b7d" stroke-width="0.2"/><path d="M5.5 0.9 H7 L9.6 4" stroke="#676b7d" fill="none" stroke-width="1.8"/><path d="M13.5 3 V7" stroke="#9296a8" fill="none" stroke-width="1.2"/><path d="M11 6 H16 L13.5 9 Z" stroke="#9296a8" fill="#9296a8" stroke-width="0.2"/><rect x="3" y="9" width="13" height="7" fill="#676b7d"/><rect x="4" y="10" width="3" height="1" fill="#fff"/><rect x="4" y="12" width="3" height="1" fill="#fff"/><rect x="4" y="14" width="3" height="1" fill="#fff"/><rect x="8" y="10" width="3" height="1" fill="#fff"/><rect x="8" y="12" width="3" height="1" fill="#fff"/><rect x="8" y="14" width="3" height="1" fill="#fff"/><rect x="12" y="10" width="3" height="1" fill="#fff"/><rect x="12" y="12" width="3" height="1" fill="#fff"/><rect x="12" y="14" width="3" height="1" fill="#fff"/></svg>
<svg style="left:89px;top:85px" width="17" height="16" viewBox="0 0 17 16"><rect x="0" y="0" width="9" height="7" fill="#676b7d"/><rect x="1" y="1" width="3" height="1" fill="#fff"/><rect x="1" y="3" width="3" height="1" fill="#fff"/><rect x="1" y="5" width="3" height="1" fill="#fff"/><rect x="5" y="1" width="3" height="1" fill="#fff"/><rect x="5" y="3" width="3" height="1" fill="#fff"/><rect x="5" y="5" width="3" height="1" fill="#fff"/><path d="M10 3.6 H14.4 V7" stroke="#9296a8" fill="none" stroke-width="1.3"/><path d="M11.6 6.5 H17.2 L14.4 10 Z" stroke="#9296a8" fill="#9296a8" stroke-width="0.2"/><rect x="7" y="9" width="9" height="7" fill="#676b7d"/><rect x="8" y="10" width="3" height="1" fill="#fff"/><rect x="8" y="12" width="3" height="1" fill="#fff"/><rect x="8" y="14" width="3" height="1" fill="#fff"/><rect x="12" y="10" width="3" height="1" fill="#fff"/><rect x="12" y="12" width="3" height="1" fill="#fff"/><rect x="12" y="14" width="3" height="1" fill="#fff"/></svg>
<div style="left:112px;top:85px;width:1px;height:18px;background:#c4c2bc"></div>
<svg style="left:119px;top:85px" width="17" height="16" viewBox="0 0 17 16"><path d="M0.6 0.6 h6 v9 h-6 z" stroke="#676b7d" fill="#dfe2ee" stroke-width="1.2"/><path d="M3.6 2.6 h6 v9 h-6 z" stroke="#676b7d" fill="#dfe2ee" stroke-width="1.2"/><path d="M6.6 4.6 h5 v9 h-5 z" stroke="#676b7d" fill="#dfe2ee" stroke-width="1.2"/><path d="M11 5 C13 3.5,15.5 5,15 7.5" stroke="#9296a8" fill="none" stroke-width="1.2"/><path d="M12.5 7 H17 L14.8 10 Z" stroke="#9296a8" fill="#9296a8" stroke-width="0.2"/><rect x="6" y="9" width="10" height="7" fill="#676b7d"/><rect x="7" y="10" width="2" height="1" fill="#fff"/><rect x="7" y="12" width="2" height="1" fill="#fff"/><rect x="7" y="14" width="2" height="1" fill="#fff"/><rect x="10" y="10" width="2" height="1" fill="#fff"/><rect x="10" y="12" width="2" height="1" fill="#fff"/><rect x="10" y="14" width="2" height="1" fill="#fff"/><rect x="13" y="10" width="2" height="1" fill="#fff"/><rect x="13" y="12" width="2" height="1" fill="#fff"/><rect x="13" y="14" width="2" height="1" fill="#fff"/></svg>
<div style="left:142px;top:85px;width:1px;height:18px;background:#c4c2bc"></div>
<svg style="left:149px;top:85px" width="17" height="16" viewBox="0 0 17 16"><path d="M9 0 V4.5 M6.5 2.5 L9 5.5 L11.5 2.5" stroke="#9296a8" fill="none" stroke-width="1.3"/><rect x="0" y="5" width="10" height="7" fill="#9296a8"/><rect x="0" y="7" width="10" height="1" fill="#c9ccd9"/><path d="M10 10.5 H16.5 V14.5 H12" stroke="#676b7d" fill="none" stroke-width="1.2"/><rect x="9" y="13" width="3.5" height="3" fill="#676b7d"/><rect x="7" y="13.3" width="2" height="0.9" fill="#676b7d"/><rect x="7" y="15" width="2" height="0.9" fill="#676b7d"/></svg>
<svg style="left:171px;top:85px" width="17" height="17" viewBox="0 0 17 17"><path d="M0 0.6 H14.5 V4" stroke="#ff0000" fill="none" stroke-width="1.3"/><rect x="12" y="3" width="5" height="3.5" fill="#ff0000"/><rect x="12.7" y="6.5" width="1.2" height="2" fill="#ff0000"/><rect x="15.2" y="6.5" width="1.2" height="2" fill="#ff0000"/><path d="M4 4.7 H9 L12.3 8 V13 L9 16.3 H4 L0.7 13 V8 Z" stroke="#000" fill="#0033e6" stroke-width="1.4"/><path d="M3 7.5 L5.5 8 L6.5 10.5 L9 9 L11 7 L11.5 9.5 L8.5 11.5 L8 14.5 L5.5 14 L5.5 11.5 L3.5 10 Z" stroke="#0a8a16" fill="#0a8a16" stroke-width="0.5"/></svg>
<svg style="left:193px;top:85px" width="17" height="16" viewBox="0 0 17 16"><path d="M0 0.6 H13.5 V3" stroke="#9296a8" fill="none" stroke-width="1.2"/><rect x="11" y="3" width="5" height="3.5" fill="#9296a8"/><rect x="11.7" y="6.5" width="1.2" height="2" fill="#9296a8"/><rect x="14.2" y="6.5" width="1.2" height="2" fill="#9296a8"/><path d="M0.6 3.6 h5 v9 h-5 z" stroke="#676b7d" fill="#e8eaf4" stroke-width="1.2"/><path d="M3.6 5.6 h5 v9 h-5 z" stroke="#676b7d" fill="#e8eaf4" stroke-width="1.2"/><path d="M6.6 6.6 h4 l3 3 v6 h-7 z" stroke="#676b7d" fill="#e8eaf4" stroke-width="1.2"/><path d="M10.4 6.8 v3 h3" stroke="#676b7d" fill="none" stroke-width="1"/></svg>
<svg style="left:211.5px;top:80px" width="16.5" height="26" viewBox="0 0 16.5 26"><defs><linearGradient id="cg214.5_80" x1="0" y1="0" x2="0" y2="1"><stop offset="0" stop-color="#a7a7c3"/><stop offset="0.45" stop-color="#c6c6db"/><stop offset="1" stop-color="#f2f2fb"/></linearGradient></defs><path d="M0 0 H11.5 L13.5 2 V22 C13.5 24,14.5 25,16.5 26 H0 C2 25,3 24,3 22 V3 C3 1.5,2 0.5,0 0 Z" fill="url(#cg214.5_80)"/><path d="M5.75 20 h5 l-2.5 3.6 z" fill="#fff" opacity=".8"/><rect x="5.75" y="16" width="5" height="1.2" fill="#000"/><path d="M5.45 18.8 h5.6 l-2.8 3.4 z" fill="#000"/></svg>
<svg style="left:229px;top:85px" width="3" height="16" viewBox="0 0 3 16" shape-rendering="crispEdges"><rect x="1" y="1" width="2" height="2" fill="#fff"/><rect x="0" y="0" width="2" height="2" fill="#8f8f88"/><rect x="1" y="5" width="2" height="2" fill="#fff"/><rect x="0" y="4" width="2" height="2" fill="#8f8f88"/><rect x="1" y="9" width="2" height="2" fill="#fff"/><rect x="0" y="8" width="2" height="2" fill="#8f8f88"/><rect x="1" y="13" width="2" height="2" fill="#fff"/><rect x="0" y="12" width="2" height="2" fill="#8f8f88"/></svg>
<svg style="left:241px;top:86px" width="11" height="14" viewBox="0 0 11 14"><path d="M2 0 L7 9 M9 0 L4 9" stroke="#a9adbb" fill="none" stroke-width="1.7"/><circle cx="2.6" cy="11" r="2" fill="none" stroke="#a9adbb" stroke-width="1.5"/><circle cx="8.4" cy="11" r="2" fill="none" stroke="#a9adbb" stroke-width="1.5"/></svg>
<svg style="left:260px;top:86px" width="16" height="13" viewBox="0 0 16 13"><path d="M0.5 0.5 h4 l3 3 v5 h-7 z" stroke="#c2c5d1" fill="#edeff6" stroke-width="1"/><rect x="2" y="3" width="4" height="0.8" fill="#c9ccd6"/><rect x="2" y="5" width="4" height="0.8" fill="#c9ccd6"/><rect x="2" y="7" width="4" height="0.8" fill="#c9ccd6"/><path d="M7.5 3.5 h4 l3 3 v6 h-7 z" stroke="#c2c5d1" fill="#edeff6" stroke-width="1"/><rect x="9" y="6" width="4" height="0.8" fill="#c9ccd6"/><rect x="9" y="8" width="4" height="0.8" fill="#c9ccd6"/><rect x="9" y="10" width="4" height="0.8" fill="#c9ccd6"/></svg>
<svg style="left:282px;top:85px" width="17" height="15" viewBox="0 0 17 15"><path d="M0.8 2.8 H11.2 V13.2 H0.8 Z" stroke="#8a5a14" fill="#f0b81e" stroke-width="1.3"/><rect x="1.6" y="3.6" width="4" height="8.8" fill="#f8d868"/><path d="M3.5 3.5 V1.8 H5 L6 0.6 L7 1.8 H8.5 V3.5 Z" stroke="#8a5a14" fill="#e8d8a0" stroke-width="1"/><path d="M6.8 7.3 h6.4 l3 2.6 v4.3 h-9.4 z" stroke="#6a5a48" fill="#eef1f8" stroke-width="1.2"/><rect x="8.5" y="9.5" width="3.5" height="0.9" fill="#8c98b8"/><rect x="8.5" y="11.5" width="6" height="0.9" fill="#8c98b8"/></svg>
<svg style="left:301px;top:80px" width="16" height="26" viewBox="0 0 16 26"><defs><linearGradient id="cg304_80" x1="0" y1="0" x2="0" y2="1"><stop offset="0" stop-color="#a7a7c3"/><stop offset="0.45" stop-color="#c6c6db"/><stop offset="1" stop-color="#f2f2fb"/></linearGradient></defs><path d="M0 0 H11 L13 2 V22 C13 24,14 25,16 26 H0 C2 25,3 24,3 22 V3 C3 1.5,2 0.5,0 0 Z" fill="url(#cg304_80)"/><path d="M5.5 20 h5 l-2.5 3.6 z" fill="#fff" opacity=".8"/><rect x="5.5" y="16" width="5" height="1.2" fill="#000"/><path d="M5.2 18.8 h5.6 l-2.8 3.4 z" fill="#000"/></svg>
<svg style="left:318px;top:85px" width="3" height="16" viewBox="0 0 3 16" shape-rendering="crispEdges"><rect x="1" y="1" width="2" height="2" fill="#fff"/><rect x="0" y="0" width="2" height="2" fill="#8f8f88"/><rect x="1" y="5" width="2" height="2" fill="#fff"/><rect x="0" y="4" width="2" height="2" fill="#8f8f88"/><rect x="1" y="9" width="2" height="2" fill="#fff"/><rect x="0" y="8" width="2" height="2" fill="#8f8f88"/><rect x="1" y="13" width="2" height="2" fill="#fff"/><rect x="0" y="12" width="2" height="2" fill="#8f8f88"/></svg>
<div style="left:326px;top:84px;width:126px;height:20px;background:#f0f0f0;border:1px solid #a3a3a3;box-shadow:inset 0 0 0 1px #fff"></div>
<svg style="left:333px;top:90px" width="13" height="11" viewBox="0 0 13 11"><text x="0" y="8" font-family="'Liberation Serif',serif" font-weight="700" font-size="11" fill="#5a5a5a">T</text><text x="5" y="10.5" font-family="'Liberation Sans',sans-serif" font-weight="700" font-size="11" fill="#000">T</text></svg>
<span class="t" style="left:351px;top:87px;font-size:12px;color:#8c8c8c;letter-spacing:-0.075px;">Default: Arial</span>
<svg style="left:442px;top:93px" width="5" height="3" viewBox="0 0 5 3"><path d="M0 0 h5 l-2.5 3 z" fill="#707070"/></svg>
<div style="left:456px;top:84px;width:58px;height:20px;background:#f0f0f0;border:1px solid #a3a3a3;box-shadow:inset 0 0 0 1px #fff"></div>
<span class="t" style="left:460px;top:87px;font-size:12px;color:#8c8c8c;">0</span>
<svg style="left:504px;top:93px" width="5" height="3" viewBox="0 0 5 3"><path d="M0 0 h5 l-2.5 3 z" fill="#707070"/></svg>
<span class="t" style="left:522px;top:85px;font-size:15px;color:#5c6074;font-family:'Liberation Serif', serif;font-weight:700;">B</span>
<span class="t" style="left:544px;top:85px;font-size:15px;color:#5c6074;font-family:'Liberation Serif', serif;font-weight:700;font-style:italic;">I</span>
<span class="t" style="left:566px;top:86px;font-size:14px;color:#5c6074;font-family:'Liberation Serif', serif;">U</span>
<div style="left:566px;top:99px;width:11px;height:1px;background:#5c6074"></div>
<span class="t" style="left:588px;top:85px;font-size:12px;color:#5c6074;font-family:'Liberation Serif', serif;font-weight:700;">x</span>
<span class="t" style="left:609px;top:85px;font-size:12px;color:#5c6074;font-family:'Liberation Serif', serif;font-weight:700;">x</span>
<span class="t" style="left:632px;top:85px;font-size:12px;color:#5c6074;font-family:'Liberation Serif', serif;font-weight:700;">x</span>
<span class="t" style="left:595px;top:84px;font-size:9px;color:#a0a4b4;">2</span>
<span class="t" style="left:617px;top:92px;font-size:9px;color:#a0a4b4;">2</span>
<span class="t" style="left:639px;top:84px;font-size:9px;color:#a0a4b4;">2</span>
<span class="t" style="left:639px;top:92px;font-size:9px;color:#a0a4b4;">1</span>
<span class="t" style="left:651px;top:85px;font-size:13px;color:#5c6074;font-family:'Liberation Serif', serif;font-weight:700;letter-spacing:1.445px;">αβ</span>
<span class="t" style="left:673px;top:82px;font-size:20px;color:#5c6074;font-family:'Liberation Serif', serif;font-weight:700;">A</span>
<svg style="left:685px;top:86px" width="5" height="3" viewBox="0 0 5 3"><path d="M0 3 L2.5 0 L5 3 Z" fill="#5c6074"/></svg>
<span class="t" style="left:698px;top:86px;font-size:12px;color:#5c6074;font-family:'Liberation Serif', serif;font-weight:700;">A</span>
<svg style="left:705px;top:86px" width="5" height="3" viewBox="0 0 5 3"><path d="M0 0 h5 l-2.5 3 z" fill="#5c6074"/></svg>
<svg style="left:718px;top:87px" width="13" height="12" viewBox="0 0 13 12"><rect x="0" y="0.0" width="12" height="1" fill="#676b7d"/><rect x="0" y="2.4" width="8" height="1" fill="#676b7d"/><rect x="0" y="4.8" width="12" height="1" fill="#676b7d"/><rect x="0" y="7.199999999999999" width="10" height="1" fill="#676b7d"/><rect x="0" y="9.6" width="8" height="1" fill="#676b7d"/></svg>
<svg style="left:736px;top:91px" width="5" height="3" viewBox="0 0 5 3"><path d="M0 0 h5 l-2.5 3 z" fill="#000"/></svg>
<svg style="left:749px;top:87px" width="12" height="11" viewBox="0 0 12 11"><rect x="0" y="0" width="1" height="11" fill="#676b7d"/><rect x="2.5" y="0" width="1" height="8" fill="#676b7d"/><rect x="5" y="0" width="1" height="11" fill="#676b7d"/><rect x="8" y="0" width="1" height="11" fill="#676b7d"/><rect x="10.5" y="0" width="1" height="8" fill="#676b7d"/></svg>
<svg style="left:767px;top:91px" width="5" height="3" viewBox="0 0 5 3"><path d="M0 0 h5 l-2.5 3 z" fill="#000"/></svg>
<svg style="left:781px;top:86px" width="17" height="15" viewBox="0 0 17 15"><text x="1.5" y="10.5" font-family="'Liberation Serif',serif" font-size="14.5" fill="#9296a8">A</text><rect x="0" y="11" width="16" height="4" fill="#6e6e6e"/></svg>
<svg style="left:803px;top:92px" width="5" height="3" viewBox="0 0 5 3"><path d="M0 0 h5 l-2.5 3 z" fill="#8a8a8a"/></svg>
<svg style="left:811px;top:80px" width="16" height="26" viewBox="0 0 16 26"><defs><linearGradient id="cg814_80" x1="0" y1="0" x2="0" y2="1"><stop offset="0" stop-color="#a7a7c3"/><stop offset="0.45" stop-color="#c6c6db"/><stop offset="1" stop-color="#f2f2fb"/></linearGradient></defs><path d="M0 0 H11 L13 2 V22 C13 24,14 25,16 26 H0 C2 25,3 24,3 22 V3 C3 1.5,2 0.5,0 0 Z" fill="url(#cg814_80)"/><path d="M5.5 20 h5 l-2.5 3.6 z" fill="#fff" opacity=".8"/><rect x="5.5" y="16" width="5" height="1.2" fill="#000"/><path d="M5.2 18.8 h5.6 l-2.8 3.4 z" fill="#000"/></svg>
<svg style="left:829px;top:85px" width="3" height="16" viewBox="0 0 3 16" shape-rendering="crispEdges"><rect x="1" y="1" width="2" height="2" fill="#fff"/><rect x="0" y="0" width="2" height="2" fill="#8f8f88"/><rect x="1" y="5" width="2" height="2" fill="#fff"/><rect x="0" y="4" width="2" height="2" fill="#8f8f88"/><rect x="1" y="9" width="2" height="2" fill="#fff"/><rect x="0" y="8" width="2" height="2" fill="#8f8f88"/><rect x="1" y="13" width="2" height="2" fill="#fff"/><rect x="0" y="12" width="2" height="2" fill="#8f8f88"/></svg>
<svg style="left:839px;top:85px" width="17" height="16" viewBox="0 0 17 16"><path d="M1.5 7 L7 1.5 L13 7.5 L7.5 12.5 Z" stroke="#676b7d" fill="#eceef8" stroke-width="1.2"/><path d="M5 3.5 C4 0.5,7 -0.5,8.5 2.5 V7" stroke="#676b7d" fill="none" stroke-width="1.1"/><path d="M10.5 4.5 C13.5 3.5,14.5 7,13.5 10 C12.5 8,12 6.5,10.5 6 Z" stroke="#9296a8" fill="#9296a8" stroke-width="0.6"/><rect x="6.5" y="5" width="2" height="1" fill="#676b7d"/><rect x="0" y="12" width="16" height="4" fill="#6e6e6e"/></svg>
<svg style="left:861px;top:92px" width="5" height="3" viewBox="0 0 5 3"><path d="M0 0 h5 l-2.5 3 z" fill="#707070"/></svg>
<svg style="left:874px;top:85px" width="17" height="16" viewBox="0 0 17 16"><ellipse cx="8.2" cy="5.8" rx="7.7" ry="5.5" fill="#a6aabb" stroke="#8b8fa3" stroke-width="1.1"/><rect x="2" y="1.5" width="1" height="1" fill="#d3d6e1"/><rect x="4" y="1.5" width="1" height="1" fill="#d3d6e1"/><rect x="6" y="1.5" width="1" height="1" fill="#d3d6e1"/><rect x="8" y="1.5" width="1" height="1" fill="#d3d6e1"/><rect x="10" y="1.5" width="1" height="1" fill="#d3d6e1"/><rect x="12" y="1.5" width="1" height="1" fill="#d3d6e1"/><rect x="14" y="1.5" width="1" height="1" fill="#d3d6e1"/><rect x="3" y="2.5" width="1" height="1" fill="#d3d6e1"/><rect x="5" y="2.5" width="1" height="1" fill="#d3d6e1"/><rect x="7" y="2.5" width="1" height="1" fill="#d3d6e1"/><rect x="9" y="2.5" width="1" height="1" fill="#d3d6e1"/><rect x="11" y="2.5" width="1" height="1" fill="#d3d6e1"/><rect x="13" y="2.5" width="1" height="1" fill="#d3d6e1"/><rect x="15" y="2.5" width="1" height="1" fill="#d3d6e1"/><rect x="2" y="3.5" width="1" height="1" fill="#d3d6e1"/><rect x="4" y="3.5" width="1" height="1" fill="#d3d6e1"/><rect x="6" y="3.5" width="1" height="1" fill="#d3d6e1"/><rect x="8" y="3.5" width="1" height="1" fill="#d3d6e1"/><rect x="10" y="3.5" width="1" height="1" fill="#d3d6e1"/><rect x="12" y="3.5" width="1" height="1" fill="#d3d6e1"/><rect x="14" y="3.5" width="1" height="1" fill="#d3d6e1"/><rect x="3" y="4.5" width="1" height="1" fill="#d3d6e1"/><rect x="5" y="4.5" width="1" height="1" fill="#d3d6e1"/><rect x="7" y="4.5" width="1" height="1" fill="#d3d6e1"/><rect x="9" y="4.5" width="1" height="1" fill="#d3d6e1"/><rect x="11" y="4.5" width="1" height="1" fill="#d3d6e1"/><rect x="13" y="4.5" width="1" height="1" fill="#d3d6e1"/><rect x="15" y="4.5" width="1" height="1" fill="#d3d6e1"/><rect x="2" y="5.5" width="1" height="1" fill="#d3d6e1"/><rect x="4" y="5.5" width="1" height="1" fill="#d3d6e1"/><rect x="6" y="5.5" width="1" height="1" fill="#d3d6e1"/><rect x="8" y="5.5" width="1" height="1" fill="#d3d6e1"/><rect x="10" y="5.5" width="1" height="1" fill="#d3d6e1"/><rect x="12" y="5.5" width="1" height="1" fill="#d3d6e1"/><rect x="14" y="5.5" width="1" height="1" fill="#d3d6e1"/><rect x="3" y="6.5" width="1" height="1" fill="#d3d6e1"/><rect x="5" y="6.5" width="1" height="1" fill="#d3d6e1"/><rect x="7" y="6.5" width="1" height="1" fill="#d3d6e1"/><rect x="9" y="6.5" width="1" height="1" fill="#d3d6e1"/><rect x="11" y="6.5" width="1" height="1" fill="#d3d6e1"/><rect x="13" y="6.5" width="1" height="1" fill="#d3d6e1"/><rect x="15" y="6.5" width="1" height="1" fill="#d3d6e1"/><rect x="2" y="7.5" width="1" height="1" fill="#d3d6e1"/><rect x="4" y="7.5" width="1" height="1" fill="#d3d6e1"/><rect x="6" y="7.5" width="1" height="1" fill="#d3d6e1"/><rect x="8" y="7.5" width="1" height="1" fill="#d3d6e1"/><rect x="10" y="7.5" width="1" height="1" fill="#d3d6e1"/><rect x="12" y="7.5" width="1" height="1" fill="#d3d6e1"/><rect x="14" y="7.5" width="1" height="1" fill="#d3d6e1"/><rect x="3" y="8.5" width="1" height="1" fill="#d3d6e1"/><rect x="5" y="8.5" width="1" height="1" fill="#d3d6e1"/><rect x="7" y="8.5" width="1" height="1" fill="#d3d6e1"/><rect x="9" y="8.5" width="1" height="1" fill="#d3d6e1"/><rect x="11" y="8.5" width="1" height="1" fill="#d3d6e1"/><rect x="13" y="8.5" width="1" height="1" fill="#d3d6e1"/><rect x="15" y="8.5" width="1" height="1" fill="#d3d6e1"/><circle cx="9.5" cy="7.5" r="1.4" fill="#fff"/><path d="M14 2 L10.5 6.5" stroke="#9296a8" fill="none" stroke-width="1.2"/><rect x="0" y="12" width="16" height="4" fill="#6e6e6e"/></svg>
<svg style="left:896px;top:92px" width="5" height="3" viewBox="0 0 5 3"><path d="M0 0 h5 l-2.5 3 z" fill="#707070"/></svg>
<svg style="left:909px;top:85px" width="17" height="16" viewBox="0 0 17 16"><path d="M3.5 10 L5 6.5 L11.5 0.8 L14 3 L7.5 9.5 Z" stroke="#676b7d" fill="#eef0f8" stroke-width="1.1"/><path d="M10.5 1.5 L13.3 4" stroke="#9296a8" fill="none" stroke-width="1.5"/><rect x="0.5" y="9.5" width="2" height="1" fill="#676b7d"/><rect x="0" y="12" width="16" height="4" fill="#6e6e6e"/></svg>
<svg style="left:931px;top:92px" width="5" height="3" viewBox="0 0 5 3"><path d="M0 0 h5 l-2.5 3 z" fill="#707070"/></svg>
<svg style="left:942px;top:85px" width="17" height="16" viewBox="0 0 17 16"><rect x="6.5" y="0.6" width="3.4" height="4.4" fill="#c9ccd9"/><path d="M6.5 5 V1.6 C6.5 0,10 0,10 1.6 V5" stroke="#9296a8" fill="none" stroke-width="1.1"/><circle cx="8.2" cy="8.6" r="4.6" fill="#9ca1b4" stroke="#9296a8" stroke-width="0.8"/><path d="M0 8.6 h2 M14.5 8.6 h2 M1.2 4 l1.6 1.4 M15.2 4 l-1.6 1.4 M1.5 13.5 l1.6 -1.5 M15 13.5 l-1.6 -1.5 M4.5 15.5 l0.8 -1.6 M12 15.5 l-0.8 -1.6 M8.2 14.6 v1.4" stroke="#676b7d" fill="none" stroke-width="1.1"/></svg>
<div style="left:963px;top:84px;width:58px;height:20px;background:#f0f0f0;border:1px solid #a3a3a3;box-shadow:inset 0 0 0 1px #fff"></div>
<div style="left:966px;top:87px;width:38px;height:14px;background:#f5f7fb"></div>
<div style="left:968px;top:95px;width:32px;height:1px;background:#000"></div>
<div style="left:968px;top:96px;width:32px;height:1px;background:rgba(0,0,0,.35)"></div>
<svg style="left:1011px;top:93px" width="5" height="3" viewBox="0 0 5 3"><path d="M0 0 h5 l-2.5 3 z" fill="#707070"/></svg>
<div style="left:1025px;top:84px;width:58px;height:20px;background:#f0f0f0;border:1px solid #a3a3a3;box-shadow:inset 0 0 0 1px #fff"></div>
<span class="t" style="left:1029px;top:87px;font-size:12px;color:#8c8c8c;">0</span>
<svg style="left:1073px;top:93px" width="5" height="3" viewBox="0 0 5 3"><path d="M0 0 h5 l-2.5 3 z" fill="#707070"/></svg>
<div style="left:1089px;top:85px;width:36px;height:16px;border:1px solid #a3a3a3;border-right-color:#fff;border-bottom-color:#fff;box-shadow:inset -1px -1px 0 rgba(255,255,255,.6)"></div>
<svg style="left:1130px;top:92px" width="5" height="3" viewBox="0 0 5 3"><path d="M0 0 h5 l-2.5 3 z" fill="#707070"/></svg>
<div style="left:1140px;top:84px;width:58px;height:20px;background:#f0f0f0;border:1px solid #a3a3a3;box-shadow:inset 0 0 0 1px #fff"></div>
<span class="t" style="left:1144px;top:87px;font-size:12px;color:#8c8c8c;">0</span>
<svg style="left:1188px;top:93px" width="5" height="3" viewBox="0 0 5 3"><path d="M0 0 h5 l-2.5 3 z" fill="#707070"/></svg>
<svg style="left:1205px;top:85px" width="17" height="16" viewBox="0 0 17 16"><clipPath id="hc"><rect x="0" y="0" width="17" height="11.5"/></clipPath><g clip-path="url(#hc)" stroke="#676b7d" stroke-width="1.5"><path d="M-9 12 L3 0"/><path d="M-5.5 12 L6.5 0"/><path d="M-2 12 L10 0"/><path d="M1.5 12 L13.5 0"/><path d="M5 12 L17 0"/><path d="M8.5 12 L20.5 0"/><path d="M12 12 L24 0"/></g><rect x="0" y="12" width="16" height="4" fill="#6e6e6e"/></svg>
<svg style="left:1227px;top:92px" width="5" height="3" viewBox="0 0 5 3"><path d="M0 0 h5 l-2.5 3 z" fill="#808080"/></svg>
<svg style="left:1238px;top:86px" width="14" height="14" viewBox="0 0 14 14"><path d="M0.5 1 H13.5 M0.5 6.5 H13.5 M0.5 1 V12 M7 1 V12 M13.5 1 V12" stroke="#b4b8c8" fill="none" stroke-width="1" stroke-dasharray="1 1.5"/><rect x="0" y="12" width="14" height="1.6" fill="#000"/></svg>
<svg style="left:1257px;top:91px" width="5" height="3" viewBox="0 0 5 3"><path d="M0 0 h5 l-2.5 3 z" fill="#000"/></svg>
<svg style="left:1269px;top:85px" width="12" height="16" viewBox="0 0 12 16"><rect x="0" y="0" width="12" height="16" fill="#676b7d"/><rect x="1.2" y="1.2" width="4.6" height="2.2" fill="#e8eaf4"/><rect x="7" y="1.2" width="5" height="2.2" fill="#e8eaf4"/><rect x="1.2" y="4.6" width="10.8" height="6.4" fill="#e8eaf4"/><rect x="1.2" y="12.4" width="4.6" height="2.4" fill="#e8eaf4"/><rect x="7" y="12.4" width="5" height="2.4" fill="#e8eaf4"/><path d="M2 8 h3 M3.5 6.5 v3" stroke="#676b7d" fill="none" stroke-width="1"/><text x="6" y="10.5" font-family="'Liberation Sans',sans-serif" font-weight="700" font-size="6" fill="#676b7d">a</text><path d="M10 8 h2" stroke="#676b7d" fill="none" stroke-width="1"/></svg>
<div style="left:59px;top:106px;width:1221px;height:2px;background:linear-gradient(#8a8a8a,#6e6e6e)"></div>
<div style="left:59px;top:106px;width:2px;height:614px;background:linear-gradient(90deg,#8a8a8a,#6e6e6e)"></div>
<div style="left:2px;top:108px;width:18px;height:150px;background:#f0f0f0;border-right:1px solid #d9d9e3"></div>
<span class="t" style="left:15px;top:113px;font-family:'Liberation Mono', monospace;font-size:10px;color:#666;transform-origin:0 0;transform:rotate(90deg);letter-spacing:0px">Project Explorer (1)</span>
<div style="left:2px;top:272px;width:18px;height:99px;background:#f0f0f0;border-right:1px solid #d9d9e3"></div>
<span class="t" style="left:15px;top:276px;font-family:'Liberation Mono', monospace;font-size:10px;color:#666;transform-origin:0 0;transform:rotate(90deg);letter-spacing:0px">Messages Log</span>
<div style="left:2px;top:385px;width:18px;height:136px;background:#f0f0f0;border-right:1px solid #d9d9e3"></div>
<span class="t" style="left:15px;top:390px;font-family:'Liberation Mono', monospace;font-size:10px;color:#666;transform-origin:0 0;transform:rotate(90deg);letter-spacing:0px">Smart Hint Log (1)</span>
<div class="vtb" style="left:23px;top:107px;width:35px;height:429px;border-radius:0 4px 5px 5px;border-left:1px solid #cfcfdf;border-bottom:1px solid #c2c2d6;border-right:1px solid #9c9cb6"></div>
<div style="left:23px;top:536px;width:35px;height:11px;border-radius:0 0 6px 0;background:linear-gradient(90deg,#eeeefa 0%,#dcdcea 50%,#b9b9d0 100%)"></div>
<div class="vtb" style="left:23px;top:548px;width:26px;height:180px;border-radius:3px 3px 0 0;border-left:1px solid #cfcfdf"></div>
<svg style="left:28px;top:110px" width="23" height="3" viewBox="0 0 23 3" shape-rendering="crispEdges"><rect x="1" y="1" width="2" height="2" fill="#fff"/><rect x="0" y="0" width="2" height="2" fill="#8f8f88"/><rect x="5" y="1" width="2" height="2" fill="#fff"/><rect x="4" y="0" width="2" height="2" fill="#8f8f88"/><rect x="9" y="1" width="2" height="2" fill="#fff"/><rect x="8" y="0" width="2" height="2" fill="#8f8f88"/><rect x="13" y="1" width="2" height="2" fill="#fff"/><rect x="12" y="0" width="2" height="2" fill="#8f8f88"/><rect x="18" y="1" width="2" height="2" fill="#fff"/><rect x="17" y="0" width="2" height="2" fill="#8f8f88"/><rect x="22" y="1" width="2" height="2" fill="#fff"/><rect x="21" y="0" width="2" height="2" fill="#8f8f88"/></svg>
<svg style="left:28px;top:551px" width="16" height="3" viewBox="0 0 16 3" shape-rendering="crispEdges"><rect x="1" y="1" width="2" height="2" fill="#fff"/><rect x="0" y="0" width="2" height="2" fill="#8f8f88"/><rect x="5" y="1" width="2" height="2" fill="#fff"/><rect x="4" y="0" width="2" height="2" fill="#8f8f88"/><rect x="10" y="1" width="2" height="2" fill="#fff"/><rect x="9" y="0" width="2" height="2" fill="#8f8f88"/><rect x="14" y="1" width="2" height="2" fill="#fff"/><rect x="13" y="0" width="2" height="2" fill="#8f8f88"/></svg>
<div style="left:25px;top:116px;width:22px;height:22px;background:#d6e6f6;border:1px solid #2a86e4;box-shadow:0 0 0 1px rgba(255,255,255,.55)"></div>
<svg style="left:31px;top:119px" width="11" height="16" viewBox="0 0 11 16"><path d="M0.6 0.8 V13 L3.6 10.2 L6 15 L8.2 14 L5.8 9.4 L10 9 Z" stroke="#676b7d" fill="#fff" stroke-width="1.1"/><rect x="5.5" y="11.5" width="1.5" height="1.5" fill="#c9ccd9"/></svg>
<svg style="left:29px;top:142px" width="14" height="15" viewBox="0 0 14 15"><circle cx="4.8" cy="4.8" r="4.2" fill="none" stroke="#676b7d" stroke-width="1.1"/><path d="M7.8 7.8 L13 13" stroke="#676b7d" fill="none" stroke-width="2"/><path d="M2.6 4.8 h4.4" stroke="#676b7d" fill="none" stroke-width="1.1"/><path d="M4.8 2.6 v4.4" stroke="#676b7d" fill="none" stroke-width="1.1"/><path d="M0.5 11.5 V14 H8.5 V11.5" stroke="#676b7d" fill="none" stroke-width="1.1"/></svg>
<svg style="left:29px;top:164px" width="14" height="15" viewBox="0 0 14 15"><circle cx="4.8" cy="4.8" r="4.2" fill="none" stroke="#676b7d" stroke-width="1.1"/><path d="M7.8 7.8 L13 13" stroke="#676b7d" fill="none" stroke-width="2"/><path d="M2.6 4.8 h4.4" stroke="#676b7d" fill="none" stroke-width="1.1"/><path d="M0.5 11.5 V14 H8.5 V11.5 M3 12.5 V14 M6 12.5 V14" stroke="#676b7d" fill="none" stroke-width="1.1"/></svg>
<svg style="left:29px;top:186px" width="13" height="14" viewBox="0 0 13 14"><path d="M6.5 0 V14 M0 7 H13" stroke="#676b7d" fill="none" stroke-width="1.1"/><path d="M5 5.5 h3 v3 h-3 z" stroke="#676b7d" fill="none" stroke-width="1"/></svg>
<svg style="left:27px;top:207px" width="16" height="16" viewBox="0 0 16 16"><circle cx="8" cy="8" r="5.4" fill="none" stroke="#676b7d" stroke-width="1.1"/><path d="M8 0 V3.5 M8 12.5 V16 M0 8 H3.5 M12.5 8 H16 M8 6 V10 M6 8 H10" stroke="#676b7d" fill="none" stroke-width="1.1"/></svg>
<svg style="left:47px;top:213px" width="5" height="3" viewBox="0 0 5 3"><path d="M0 0 h5 l-2.5 3 z" fill="#000"/></svg>
<svg style="left:32px;top:229px" width="8" height="16" viewBox="0 0 8 16"><path d="M4 0 V4" stroke="#676b7d" fill="none" stroke-width="1.2"/><path d="M0.5 3.5 H7.5 L4 7.5 Z" stroke="#676b7d" fill="#676b7d" stroke-width="0.2"/><path d="M4 16 V12" stroke="#676b7d" fill="none" stroke-width="1.2"/><path d="M0.5 12.5 H7.5 L4 8.8 Z" stroke="#676b7d" fill="#676b7d" stroke-width="0.2"/></svg>
<svg style="left:27px;top:251px" width="17" height="16" viewBox="0 0 17 16"><path d="M3.5 0 V4" stroke="#676b7d" fill="none" stroke-width="1.3"/><path d="M0 3.5 H7 L3.5 7.5 Z" stroke="#676b7d" fill="#676b7d" stroke-width="0.2"/><ellipse cx="8.5" cy="11" rx="7.3" ry="3.8" fill="#a3a7b8" stroke="#9296a8" stroke-width="0.9" stroke-dasharray="2 1"/></svg>
<svg style="left:47px;top:257px" width="5" height="3" viewBox="0 0 5 3"><path d="M0 0 h5 l-2.5 3 z" fill="#000"/></svg>
<svg style="left:27px;top:273px" width="17" height="17" viewBox="0 0 17 17"><path d="M3.5 0 V4" stroke="#676b7d" fill="none" stroke-width="1.3"/><path d="M0 3.5 H7 L3.5 7.5 Z" stroke="#676b7d" fill="#676b7d" stroke-width="0.2"/><path d="M6.5 15.5 V8.5 H15 M9 12 H15 M9 15.5 H14" stroke="#9296a8" fill="none" stroke-width="1.2" stroke-dasharray="3 1.2"/><path d="M1 15.5 L15.5 6.5" stroke="#9296a8" fill="none" stroke-width="1"/></svg>
<svg style="left:47px;top:279px" width="5" height="3" viewBox="0 0 5 3"><path d="M0 0 h5 l-2.5 3 z" fill="#000"/></svg>
<svg style="left:30px;top:297px" width="11" height="11" viewBox="0 0 11 11"><rect x="2" y="0" width="2" height="2" fill="#676b7d"/><rect x="0" y="4" width="2" height="2" fill="#676b7d"/><rect x="8.5" y="2.5" width="2" height="1.6" fill="#676b7d"/><rect x="8.5" y="5.5" width="2" height="1.6" fill="#676b7d"/><rect x="4.5" y="8" width="2" height="2" fill="#676b7d"/></svg>
<span class="t" style="left:30px;top:315px;font-size:17px;color:#5c6074;font-family:'Liberation Serif', serif;">T</span>
<svg style="left:29px;top:340px" width="15" height="15" viewBox="0 0 15 15"><rect x="0" y="3" width="12" height="12" fill="#676b7d"/><rect x="1.3" y="4.3" width="4" height="4" fill="#f4f5fb"/><rect x="6.7" y="4.3" width="4" height="4" fill="#f4f5fb"/><rect x="1.3" y="9.7" width="4" height="4" fill="#f4f5fb"/><rect x="6.7" y="9.7" width="4" height="4" fill="#f4f5fb"/><rect x="4.5" y="7.5" width="3" height="3" fill="#676b7d"/><circle cx="13" cy="2" r="1.5" fill="#fff" stroke="#9296a8" stroke-width="0.8"/></svg>
<svg style="left:28px;top:362px" width="13" height="13" viewBox="0 0 13 13"><path d="M0.5 12.5 L9 4" stroke="#676b7d" fill="none" stroke-width="1.3"/><path d="M4.5 0.8 H12.2 V8.5 Z" stroke="#676b7d" fill="#676b7d" stroke-width="0.3"/></svg>
<svg style="left:47px;top:367px" width="5" height="3" viewBox="0 0 5 3"><path d="M0 0 h5 l-2.5 3 z" fill="#000"/></svg>
<svg style="left:28px;top:385px" width="13" height="13" viewBox="0 0 13 13"><path d="M0.5 12 L12.5 0.8" stroke="#676b7d" fill="none" stroke-width="1.3"/></svg>
<svg style="left:47px;top:389px" width="5" height="3" viewBox="0 0 5 3"><path d="M0 0 h5 l-2.5 3 z" fill="#000"/></svg>
<svg style="left:29px;top:408px" width="13" height="10" viewBox="0 0 13 10"><path d="M0.6 0.6 H12.4 V9.4 H0.6 Z" stroke="#676b7d" fill="#b3b7c8" stroke-width="1.2"/></svg>
<svg style="left:47px;top:411px" width="5" height="3" viewBox="0 0 5 3"><path d="M0 0 h5 l-2.5 3 z" fill="#000"/></svg>
<svg style="left:29px;top:428px" width="13" height="15" viewBox="0 0 13 15"><g transform="translate(1,0.5)"><path d="M3.5 8 V2.2 C3.5 1,5.3 1,5.3 2.2 V6 V1.2 C5.3 0,7.1 0,7.1 1.2 V6 V1.6 C7.1 0.4,8.9 0.4,8.9 1.6 V6.5 V3 C8.9 1.8,10.7 1.8,10.7 3 V9.5 C10.7 11.5,9.7 12,9.5 13.5 H4.5 C3.5 11.5,1.5 10,0.6 7.6 C0.2 6.4,1.6 6,2.4 7 Z" stroke="#676b7d" fill="#f2f3fa" stroke-width="1.1" stroke-linejoin="round"/></g></svg>
<svg style="left:28px;top:449px" width="15" height="16" viewBox="0 0 15 16"><path d="M0.6 0.6 H11 L14.4 4 V15.4 H0.6 Z" stroke="#676b7d" fill="#e3e6f7" stroke-width="1.2"/><path d="M10.8 0.8 V4.2 H14.2" stroke="#676b7d" fill="none" stroke-width="1"/><path d="M2 9.5 L3.5 9 L5 13 L7 5.5 H13" stroke="#9296a8" fill="none" stroke-width="1.1"/><circle cx="10" cy="10.5" r="2.2" fill="none" stroke="#9296a8" stroke-width="1"/><path d="M12.4 8 V13" stroke="#9296a8" fill="none" stroke-width="1"/><path d="M2.5 14 H12.5" stroke="#b4b8c8" fill="none" stroke-width="0.8" stroke-dasharray="1 1"/></svg>
<svg style="left:47px;top:455px" width="5" height="3" viewBox="0 0 5 3"><path d="M0 0 h5 l-2.5 3 z" fill="#000"/></svg>
<svg style="left:28px;top:471px" width="15" height="16" viewBox="0 0 15 16"><path d="M0.6 0.6 H11 L14.4 4 V15.4 H0.6 Z" stroke="#676b7d" fill="#e3e6f7" stroke-width="1.2"/><path d="M10.8 0.8 V4.2 H14.2" stroke="#676b7d" fill="none" stroke-width="1"/><path d="M3.5 5 V12.5 H13" stroke="#676b7d" fill="none" stroke-width="1.2"/><rect x="2" y="6" width="2" height="0.8" fill="#676b7d"/><rect x="2" y="8" width="2" height="0.8" fill="#676b7d"/><rect x="2" y="10" width="2" height="0.8" fill="#676b7d"/><rect x="5.5" y="12.5" width="0.8" height="1.5" fill="#676b7d"/><rect x="7.5" y="12.5" width="0.8" height="1.5" fill="#676b7d"/><rect x="9.5" y="12.5" width="0.8" height="1.5" fill="#676b7d"/><rect x="11.5" y="12.5" width="0.8" height="1.5" fill="#676b7d"/><path d="M4.5 8 C6 7.5,6.5 10.5,8.5 10 S10.5 6,12.5 6" stroke="#9296a8" fill="none" stroke-width="1"/></svg>
<svg style="left:47px;top:477px" width="5" height="3" viewBox="0 0 5 3"><path d="M0 0 h5 l-2.5 3 z" fill="#000"/></svg>
<svg style="left:28px;top:493px" width="17" height="17" viewBox="0 0 17 17"><g transform="translate(0,0)"><path d="M3.5 8 V2.2 C3.5 1,5.3 1,5.3 2.2 V6 V1.2 C5.3 0,7.1 0,7.1 1.2 V6 V1.6 C7.1 0.4,8.9 0.4,8.9 1.6 V6.5 V3 C8.9 1.8,10.7 1.8,10.7 3 V9.5 C10.7 11.5,9.7 12,9.5 13.5 H4.5 C3.5 11.5,1.5 10,0.6 7.6 C0.2 6.4,1.6 6,2.4 7 Z" stroke="#676b7d" fill="#f2f3fa" stroke-width="1.1" stroke-linejoin="round"/></g><path d="M14.5 0.5 V16 M0.5 13.8 H16.5 M14.5 2 h2 M14.5 5.5 h2 M14.5 9 h2 M2 13.8 v2 M7 13.8 v2 M11 13.8 v2" stroke="#676b7d" fill="none" stroke-width="1.1"/></svg>
<svg style="left:28px;top:515px" width="17" height="16" viewBox="0 0 17 16"><path d="M0.6 7 L4 4 V10 Z" stroke="#9296a8" fill="#e8eaf3" stroke-width="1"/><path d="M4.6 3.6 L7.5 0.6 H16.4 V12.4 L13.4 15.4 H4.6 Z" stroke="#676b7d" fill="#c4c7d6" stroke-width="1.1"/><path d="M4.6 3.6 H13.4 V15.4 H4.6 Z" stroke="#676b7d" fill="#a3a7b8" stroke-width="1.1"/><path d="M13.4 3.6 L16.4 0.6" stroke="#676b7d" fill="none" stroke-width="1"/></svg>
<svg style="left:48px;top:538px" width="7" height="7" viewBox="0 0 7 7"><rect x="0" y="0" width="1.3" height="7" fill="#000"/><path d="M2.6 0 L6.6 3.5 L2.6 7 Z" stroke="#000" fill="#000" stroke-width="0.2"/></svg>
<svg style="left:28px;top:561px" width="16" height="15" viewBox="0 0 16 15"><rect x="0" y="0" width="16" height="2.6" fill="#b0b4c5"/><rect x="0" y="4" width="16" height="2.6" fill="#a9adbf"/><rect x="0" y="8" width="16" height="2.6" fill="#a3a7b9"/><rect x="0" y="12" width="16" height="2.6" fill="#8f93a6"/></svg>
<svg style="left:28px;top:582px" width="16" height="16" viewBox="0 0 16 16"><circle cx="8" cy="8" r="7.3" fill="#eceef8" stroke="#676b7d" stroke-width="1.1"/><path d="M3.8 13 C1.5 9,4 5.5,8 5.5 S14.5 9,12.2 13" stroke="#676b7d" fill="none" stroke-width="1.1"/><path d="M5.8 14 C4.5 11,6 9,8 9 S11.5 11,10.2 14" stroke="#b4b8c8" fill="none" stroke-width="1"/><path d="M6.8 15 V12.2 C6.8 11,9.2 11,9.2 12.2 V15" stroke="#676b7d" fill="#fff" stroke-width="1"/></svg>
<svg style="left:28px;top:604px" width="16" height="16" viewBox="0 0 16 16"><path d="M0.6 16 V0.6 H15.4 V16" stroke="#676b7d" fill="none" stroke-width="1.2"/><path d="M2.5 4.5 H7.5" stroke="#676b7d" fill="none" stroke-width="1.3"/><path d="M2.5 11.5 H7.5" stroke="#b4b8c8" fill="none" stroke-width="1.1"/><rect x="4.2" y="10.5" width="1.8" height="2" fill="#9296a8"/><text x="8.6" y="7.5" font-family="'Liberation Sans',sans-serif" font-weight="700" font-size="7" fill="#676b7d">B</text><text x="8.6" y="14.5" font-family="'Liberation Sans',sans-serif" font-weight="700" font-size="7" fill="#676b7d">C</text></svg>
<svg style="left:28px;top:625px" width="16" height="16" viewBox="0 0 16 16"><path d="M7.5 0.5 V7 M4.2 2 L10.8 5.5 M10.8 2 L4.2 5.5" stroke="#676b7d" fill="none" stroke-width="1.2"/><path d="M0.6 15.5 V9.6 H15.4 V15.5" stroke="#676b7d" fill="none" stroke-width="1.2"/></svg>
<svg style="left:30px;top:648px" width="10" height="16" viewBox="0 0 10 16"><rect x="0" y="0" width="10" height="1.4" fill="#676b7d"/><rect x="0" y="0" width="1.2" height="16" fill="#676b7d"/><rect x="8.8" y="0" width="1.2" height="16" fill="#676b7d"/><rect x="1.2" y="1.4" width="7.6" height="14.6" fill="#eef0f8"/><rect x="6.5" y="3.0" width="2.3" height="0.9" fill="#676b7d"/><rect x="6.5" y="5.5" width="2.3" height="0.9" fill="#676b7d"/><rect x="6.5" y="8.0" width="2.3" height="0.9" fill="#676b7d"/><rect x="6.5" y="10.5" width="2.3" height="0.9" fill="#676b7d"/><rect x="6.5" y="13.0" width="2.3" height="0.9" fill="#676b7d"/><path d="M2.2 4 h3.2 M3.8 2.4 v3.2" stroke="#676b7d" fill="none" stroke-width="0.9"/><path d="M2.2 9 h3.2 M3.8 7.4 v3.2" stroke="#676b7d" fill="none" stroke-width="0.9"/><path d="M2.2 13.2 l2.6 -1.4 v2.8 z" stroke="#676b7d" fill="#676b7d" stroke-width="0.3"/></svg>
<svg style="left:28px;top:669px" width="17" height="17" viewBox="0 0 17 17"><circle cx="6.5" cy="7" r="6" fill="#e6e8f3" stroke="#9296a8" stroke-width="1" stroke-dasharray="2.4 0.8"/><path d="M6.5 3.5 V7.5 H9" stroke="#676b7d" fill="none" stroke-width="1.1"/><rect x="9.6" y="6.5" width="4.8" height="5" rx="1.6" fill="#858a9e"/><rect x="7.8" y="10.5" width="8.4" height="3.4" rx="1.2" fill="#858a9e"/><rect x="7" y="14.5" width="10" height="2.2" fill="#858a9e"/><rect x="8" y="15.2" width="8" height="0.8" fill="#e4e6ee"/></svg>
<svg style="left:28px;top:692px" width="17" height="16" viewBox="0 0 17 16"><path d="M0.6 12.4 V0.6 H5 L6.4 2.4 H12.4 V12.4 Z" stroke="#676b7d" fill="#a3a7b8" stroke-width="1.1"/><rect x="9.6" y="5.5" width="4.8" height="5" rx="1.6" fill="#858a9e"/><rect x="7.8" y="9.5" width="8.4" height="3.4" rx="1.2" fill="#858a9e"/><rect x="7" y="13.5" width="10" height="2.2" fill="#858a9e"/><rect x="8" y="14.2" width="8" height="0.8" fill="#e4e6ee"/></svg>
<svg style="left:29px;top:716px" width="14" height="6" viewBox="0 0 14 6"><rect x="0" y="0" width="14" height="6" fill="#676b7d"/><rect x="1.3" y="1.3" width="3.2" height="5" fill="#f1f2f9"/><rect x="5.5" y="1.3" width="3.2" height="5" fill="#f1f2f9"/><rect x="9.6" y="1.3" width="3.2" height="5" fill="#f1f2f9"/></svg>
<div style="left:61px;top:108px;width:220px;height:24px;background:#e1e0e5"></div>
<div style="left:61px;top:132px;width:86px;height:576px;background:#e1e0e5"></div>
<div style="left:147px;top:132px;width:134px;height:48px;background:#fbfac8"></div>
<div style="left:147px;top:180px;width:134px;height:16px;background:#f9f8b4"></div>
<div style="left:147px;top:196px;width:134px;height:512px;background:#f4f4f4"></div>
<div style="left:147px;top:147px;width:134px;height:1px;background:#c3c3c3"></div>
<div style="left:147px;top:163px;width:134px;height:1px;background:#c3c3c3"></div>
<div style="left:147px;top:179px;width:134px;height:1px;background:#c3c3c3"></div>
<div style="left:147px;top:195px;width:134px;height:1px;background:#c3c3c3"></div>
<div style="left:147px;top:211px;width:134px;height:1px;background:#c3c3c3"></div>
<div style="left:147px;top:227px;width:134px;height:1px;background:#c3c3c3"></div>
<div style="left:147px;top:243px;width:134px;height:1px;background:#c3c3c3"></div>
<div style="left:147px;top:259px;width:134px;height:1px;background:#c3c3c3"></div>
<div style="left:147px;top:275px;width:134px;height:1px;background:#c3c3c3"></div>
<div style="left:147px;top:291px;width:134px;height:1px;background:#c3c3c3"></div>
<div style="left:147px;top:307px;width:134px;height:1px;background:#c3c3c3"></div>
<div style="left:147px;top:323px;width:134px;height:1px;background:#c3c3c3"></div>
<div style="left:147px;top:339px;width:134px;height:1px;background:#c3c3c3"></div>
<div style="left:147px;top:355px;width:134px;height:1px;background:#c3c3c3"></div>
<div style="left:147px;top:371px;width:134px;height:1px;background:#c3c3c3"></div>
<div style="left:147px;top:387px;width:134px;height:1px;background:#c3c3c3"></div>
<div style="left:147px;top:403px;width:134px;height:1px;background:#c3c3c3"></div>
<div style="left:147px;top:419px;width:134px;height:1px;background:#c3c3c3"></div>
<div style="left:147px;top:435px;width:134px;height:1px;background:#c3c3c3"></div>
<div style="left:147px;top:451px;width:134px;height:1px;background:#c3c3c3"></div>
<div style="left:147px;top:467px;width:134px;height:1px;background:#c3c3c3"></div>
<div style="left:147px;top:483px;width:134px;height:1px;background:#c3c3c3"></div>
<div style="left:147px;top:499px;width:134px;height:1px;background:#c3c3c3"></div>
<div style="left:147px;top:515px;width:134px;height:1px;background:#c3c3c3"></div>
<div style="left:147px;top:531px;width:134px;height:1px;background:#c3c3c3"></div>
<div style="left:147px;top:547px;width:134px;height:1px;background:#c3c3c3"></div>
<div style="left:147px;top:563px;width:134px;height:1px;background:#c3c3c3"></div>
<div style="left:147px;top:579px;width:134px;height:1px;background:#c3c3c3"></div>
<div style="left:147px;top:595px;width:134px;height:1px;background:#c3c3c3"></div>
<div style="left:147px;top:611px;width:134px;height:1px;background:#c3c3c3"></div>
<div style="left:147px;top:627px;width:134px;height:1px;background:#c3c3c3"></div>
<div style="left:147px;top:643px;width:134px;height:1px;background:#c3c3c3"></div>
<div style="left:147px;top:659px;width:134px;height:1px;background:#c3c3c3"></div>
<div style="left:147px;top:675px;width:134px;height:1px;background:#c3c3c3"></div>
<div style="left:147px;top:691px;width:134px;height:1px;background:#c3c3c3"></div>
<div style="left:147px;top:707px;width:134px;height:1px;background:#c3c3c3"></div>
<div style="left:213px;top:132px;width:1px;height:576px;background:#c3c3c3"></div>
<div style="left:280px;top:132px;width:1px;height:576px;background:#c3c3c3"></div>
<div style="left:61px;top:131px;width:220px;height:1px;background:#000"></div>
<div style="left:61px;top:132px;width:85px;height:1px;background:rgba(255,255,255,.35)"></div>
<div style="left:61px;top:147px;width:86px;height:1px;background:#000"></div>
<div style="left:61px;top:148px;width:85px;height:1px;background:rgba(255,255,255,.35)"></div>
<div style="left:61px;top:163px;width:86px;height:1px;background:#000"></div>
<div style="left:61px;top:164px;width:85px;height:1px;background:rgba(255,255,255,.35)"></div>
<div style="left:61px;top:179px;width:86px;height:1px;background:#000"></div>
<div style="left:61px;top:180px;width:85px;height:1px;background:rgba(255,255,255,.35)"></div>
<div style="left:61px;top:195px;width:86px;height:1px;background:#000"></div>
<div style="left:61px;top:196px;width:85px;height:1px;background:rgba(255,255,255,.35)"></div>
<div style="left:61px;top:211px;width:86px;height:1px;background:#000"></div>
<div style="left:61px;top:212px;width:85px;height:1px;background:rgba(255,255,255,.35)"></div>
<div style="left:61px;top:227px;width:86px;height:1px;background:#000"></div>
<div style="left:61px;top:228px;width:85px;height:1px;background:rgba(255,255,255,.35)"></div>
<div style="left:61px;top:243px;width:86px;height:1px;background:#000"></div>
<div style="left:61px;top:244px;width:85px;height:1px;background:rgba(255,255,255,.35)"></div>
<div style="left:61px;top:259px;width:86px;height:1px;background:#000"></div>
<div style="left:61px;top:260px;width:85px;height:1px;background:rgba(255,255,255,.35)"></div>
<div style="left:61px;top:275px;width:86px;height:1px;background:#000"></div>
<div style="left:61px;top:276px;width:85px;height:1px;background:rgba(255,255,255,.35)"></div>
<div style="left:61px;top:291px;width:86px;height:1px;background:#000"></div>
<div style="left:61px;top:292px;width:85px;height:1px;background:rgba(255,255,255,.35)"></div>
<div style="left:61px;top:307px;width:86px;height:1px;background:#000"></div>
<div style="left:61px;top:308px;width:85px;height:1px;background:rgba(255,255,255,.35)"></div>
<div style="left:61px;top:323px;width:86px;height:1px;background:#000"></div>
<div style="left:61px;top:324px;width:85px;height:1px;background:rgba(255,255,255,.35)"></div>
<div style="left:61px;top:339px;width:86px;height:1px;background:#000"></div>
<div style="left:61px;top:340px;width:85px;height:1px;background:rgba(255,255,255,.35)"></div>
<div style="left:61px;top:355px;width:86px;height:1px;background:#000"></div>
<div style="left:61px;top:356px;width:85px;height:1px;background:rgba(255,255,255,.35)"></div>
<div style="left:61px;top:371px;width:86px;height:1px;background:#000"></div>
<div style="left:61px;top:372px;width:85px;height:1px;background:rgba(255,255,255,.35)"></div>
<div style="left:61px;top:387px;width:86px;height:1px;background:#000"></div>
<div style="left:61px;top:388px;width:85px;height:1px;background:rgba(255,255,255,.35)"></div>
<div style="left:61px;top:403px;width:86px;height:1px;background:#000"></div>
<div style="left:61px;top:404px;width:85px;height:1px;background:rgba(255,255,255,.35)"></div>
<div style="left:61px;top:419px;width:86px;height:1px;background:#000"></div>
<div style="left:61px;top:420px;width:85px;height:1px;background:rgba(255,255,255,.35)"></div>
<div style="left:61px;top:435px;width:86px;height:1px;background:#000"></div>
<div style="left:61px;top:436px;width:85px;height:1px;background:rgba(255,255,255,.35)"></div>
<div style="left:61px;top:451px;width:86px;height:1px;background:#000"></div>
<div style="left:61px;top:452px;width:85px;height:1px;background:rgba(255,255,255,.35)"></div>
<div style="left:61px;top:467px;width:86px;height:1px;background:#000"></div>
<div style="left:61px;top:468px;width:85px;height:1px;background:rgba(255,255,255,.35)"></div>
<div style="left:61px;top:483px;width:86px;height:1px;background:#000"></div>
<div style="left:61px;top:484px;width:85px;height:1px;background:rgba(255,255,255,.35)"></div>
<div style="left:61px;top:499px;width:86px;height:1px;background:#000"></div>
<div style="left:61px;top:500px;width:85px;height:1px;background:rgba(255,255,255,.35)"></div>
<div style="left:61px;top:515px;width:86px;height:1px;background:#000"></div>
<div style="left:61px;top:516px;width:85px;height:1px;background:rgba(255,255,255,.35)"></div>
<div style="left:61px;top:531px;width:86px;height:1px;background:#000"></div>
<div style="left:61px;top:532px;width:85px;height:1px;background:rgba(255,255,255,.35)"></div>
<div style="left:61px;top:547px;width:86px;height:1px;background:#000"></div>
<div style="left:61px;top:548px;width:85px;height:1px;background:rgba(255,255,255,.35)"></div>
<div style="left:61px;top:563px;width:86px;height:1px;background:#000"></div>
<div style="left:61px;top:564px;width:85px;height:1px;background:rgba(255,255,255,.35)"></div>
<div style="left:61px;top:579px;width:86px;height:1px;background:#000"></div>
<div style="left:61px;top:580px;width:85px;height:1px;background:rgba(255,255,255,.35)"></div>
<div style="left:61px;top:595px;width:86px;height:1px;background:#000"></div>
<div style="left:61px;top:596px;width:85px;height:1px;background:rgba(255,255,255,.35)"></div>
<div style="left:61px;top:611px;width:86px;height:1px;background:#000"></div>
<div style="left:61px;top:612px;width:85px;height:1px;background:rgba(255,255,255,.35)"></div>
<div style="left:61px;top:627px;width:86px;height:1px;background:#000"></div>
<div style="left:61px;top:628px;width:85px;height:1px;background:rgba(255,255,255,.35)"></div>
<div style="left:61px;top:643px;width:86px;height:1px;background:#000"></div>
<div style="left:61px;top:644px;width:85px;height:1px;background:rgba(255,255,255,.35)"></div>
<div style="left:61px;top:659px;width:86px;height:1px;background:#000"></div>
<div style="left:61px;top:660px;width:85px;height:1px;background:rgba(255,255,255,.35)"></div>
<div style="left:61px;top:675px;width:86px;height:1px;background:#000"></div>
<div style="left:61px;top:676px;width:85px;height:1px;background:rgba(255,255,255,.35)"></div>
<div style="left:61px;top:691px;width:86px;height:1px;background:#000"></div>
<div style="left:61px;top:692px;width:85px;height:1px;background:rgba(255,255,255,.35)"></div>
<div style="left:61px;top:707px;width:86px;height:1px;background:#000"></div>
<div style="left:61px;top:108px;width:1px;height:600px;background:rgba(255,255,255,.35)"></div>
<div style="left:61px;top:108px;width:220px;height:1px;background:rgba(255,255,255,.35)"></div>
<div style="left:146px;top:108px;width:1px;height:600px;background:#000"></div>
<div style="left:213px;top:108px;width:1px;height:24px;background:#000"></div>
<div style="left:280px;top:108px;width:1px;height:24px;background:#000"></div>
<span class="t" style="left:169px;top:112px;font-size:12px;color:#000;letter-spacing:-0.25px;">A(X)</span>
<span class="t" style="left:236px;top:112px;font-size:12px;color:#000;letter-spacing:-0.25px;">B(Y)</span>
<span class="t" style="left:77.5px;top:133px;font-size:12.5px;color:#000;letter-spacing:-0.069px;">Long Name</span>
<span class="t" style="left:113.0px;top:149px;font-size:12.5px;color:#000;letter-spacing:0.003px;">Units</span>
<span class="t" style="left:80.0px;top:165px;font-size:12.5px;color:#000;letter-spacing:0.133px;">Comments</span>
<span class="t" style="left:114.0px;top:181px;font-size:12.5px;color:#000;letter-spacing:-0.403px;">F(x)=</span>
<span class="t" style="right:1138px;top:197px;font-size:12.5px;color:#000;">1</span>
<span class="t" style="right:1138px;top:213px;font-size:12.5px;color:#000;">2</span>
<span class="t" style="right:1138px;top:229px;font-size:12.5px;color:#000;">3</span>
<span class="t" style="right:1138px;top:245px;font-size:12.5px;color:#000;">4</span>
<span class="t" style="right:1138px;top:261px;font-size:12.5px;color:#000;">5</span>
<span class="t" style="right:1138px;top:277px;font-size:12.5px;color:#000;">6</span>
<span class="t" style="right:1138px;top:293px;font-size:12.5px;color:#000;">7</span>
<span class="t" style="right:1138px;top:309px;font-size:12.5px;color:#000;">8</span>
<span class="t" style="right:1138px;top:325px;font-size:12.5px;color:#000;">9</span>
<span class="t" style="right:1138px;top:341px;font-size:12.5px;color:#000;">10</span>
<span class="t" style="right:1138px;top:357px;font-size:12.5px;color:#000;">11</span>
<span class="t" style="right:1138px;top:373px;font-size:12.5px;color:#000;">12</span>
<span class="t" style="right:1138px;top:389px;font-size:12.5px;color:#000;">13</span>
<span class="t" style="right:1138px;top:405px;font-size:12.5px;color:#000;">14</span>
<span class="t" style="right:1138px;top:421px;font-size:12.5px;color:#000;">15</span>
<span class="t" style="right:1138px;top:437px;font-size:12.5px;color:#000;">16</span>
<span class="t" style="right:1138px;top:453px;font-size:12.5px;color:#000;">17</span>
<span class="t" style="right:1138px;top:469px;font-size:12.5px;color:#000;">18</span>
<span class="t" style="right:1138px;top:485px;font-size:12.5px;color:#000;">19</span>
<span class="t" style="right:1138px;top:501px;font-size:12.5px;color:#000;">20</span>
<span class="t" style="right:1138px;top:517px;font-size:12.5px;color:#000;">21</span>
<span class="t" style="right:1138px;top:533px;font-size:12.5px;color:#000;">22</span>
<span class="t" style="right:1138px;top:549px;font-size:12.5px;color:#000;">23</span>
<span class="t" style="right:1138px;top:565px;font-size:12.5px;color:#000;">24</span>
<span class="t" style="right:1138px;top:581px;font-size:12.5px;color:#000;">25</span>
<span class="t" style="right:1138px;top:597px;font-size:12.5px;color:#000;">26</span>
<span class="t" style="right:1138px;top:613px;font-size:12.5px;color:#000;">27</span>
<span class="t" style="right:1138px;top:629px;font-size:12.5px;color:#000;">28</span>
<span class="t" style="right:1138px;top:645px;font-size:12.5px;color:#000;">29</span>
<span class="t" style="right:1138px;top:661px;font-size:12.5px;color:#000;">30</span>
<span class="t" style="right:1138px;top:677px;font-size:12.5px;color:#000;">31</span>
<span class="t" style="right:1138px;top:693px;font-size:12.5px;color:#000;">32</span>
<div style="left:323px;top:257px;width:821px;height:252px;background:#f0f0f0;border:1px solid #5c5c5c;box-shadow:0 0 7px 0 rgba(0,0,0,.2),0 5px 22px 2px rgba(0,0,0,.2)"></div>
<div style="left:324px;top:258px;width:819px;height:30px;background:#fff"></div>
<span class="t" style="left:353px;top:266px;font-size:12.5px;color:#000;letter-spacing:0.176px;">Plot Setup: Select Data to Create New Plot</span>
<span class="t" style="left:328px;top:298px;font-size:12px;color:#000;letter-spacing:-0.216px;">Plot Type:</span>
<div style="left:328px;top:318px;width:204px;height:155px;background:#fff;border:1px solid #828282;border-right-color:#e3e3e3;border-bottom-color:#e3e3e3;box-shadow:inset 1px 1px 0 #a0a0a0"></div>
<div style="left:330px;top:320px;width:183px;height:20px;background:#0078d7;outline:1px dotted #e8b070;outline-offset:-1px"></div>
<span class="t" style="left:333px;top:323px;font-size:12px;color:#fff;letter-spacing:-0.172px;">Line</span>
<span class="t" style="left:333px;top:344px;font-size:12px;color:#000;letter-spacing:-0.288px;">Scatter</span>
<div style="left:330px;top:340px;width:183px;height:1px;background:#f0f0f0"></div>
<span class="t" style="left:333px;top:365px;font-size:12px;color:#000;letter-spacing:-0.107px;">Line + Symbol</span>
<div style="left:330px;top:361px;width:183px;height:1px;background:#f0f0f0"></div>
<span class="t" style="left:333px;top:386px;font-size:12px;color:#000;letter-spacing:0.081px;">Column / Bar</span>
<div style="left:330px;top:382px;width:183px;height:1px;background:#f0f0f0"></div>
<span class="t" style="left:333px;top:407px;font-size:12px;color:#000;letter-spacing:-0.34px;">Area</span>
<div style="left:330px;top:403px;width:183px;height:1px;background:#f0f0f0"></div>
<span class="t" style="left:333px;top:428px;font-size:12px;color:#000;letter-spacing:-0.283px;">Stacked Area</span>
<div style="left:330px;top:424px;width:183px;height:1px;background:#f0f0f0"></div>
<span class="t" style="left:333px;top:449px;font-size:12px;color:#000;letter-spacing:-0.151px;">Fill Area</span>
<div style="left:330px;top:445px;width:183px;height:1px;background:#f0f0f0"></div>
<div style="left:330px;top:466px;width:183px;height:1px;background:#f0f0f0"></div>
<div style="left:513px;top:320px;width:17px;height:151px;background:#f0f0f0"></div>
<div style="left:515px;top:337px;width:15px;height:36px;background:#cdcdcd"></div>
<svg style="left:517px;top:325px" width="10" height="8" viewBox="0 0 10 8"><path d="M1.5 6 L5 2.5 L8.5 6" fill="none" stroke="#505050" stroke-width="1.7"/></svg>
<svg style="left:517px;top:460px" width="10" height="8" viewBox="0 0 10 8"><path d="M1.5 2 L5 5.5 L8.5 2" fill="none" stroke="#505050" stroke-width="1.7"/></svg>
<div style="left:538px;top:293px;width:54px;height:24px;background:#e1e1e1;border:1px solid #adadad"></div>
<span class="t" style="left:543px;top:298px;font-size:12px;color:#000;letter-spacing:-0.431px;">Show(S)</span>
<span class="t" style="left:597px;top:298px;font-size:12px;color:#000;letter-spacing:-0.21px;">[Book1]Sheet1</span>
<div style="left:1080px;top:293px;width:26px;height:24px;background:#e1e1e1;border:1px solid #adadad"></div>
<div style="left:1112px;top:293px;width:26px;height:24px;background:#e1e1e1;border:1px solid #adadad"></div>
<div style="left:1112px;top:479px;width:26px;height:24px;background:#e1e1e1;border:1px solid #adadad"></div>
<div style="left:928px;top:479px;width:86px;height:24px;background:#cccccc;border:1px solid #bfbfbf"></div>
<div style="left:1020px;top:479px;width:86px;height:24px;background:#e1e1e1;border:1px solid #adadad"></div>
<span class="t" style="left:962px;top:484px;font-size:12px;color:#838383;letter-spacing:-0.172px;">OK</span>
<span class="t" style="left:1045px;top:484px;font-size:12px;color:#000;letter-spacing:-0.227px;">Cancel</span>
<div style="left:537px;top:318px;width:601px;height:155px;background:#808080;border:1px solid #828282;border-right-color:#fff;border-bottom-color:#fff;box-shadow:inset 1px 1px 0 #696969"></div>
<div style="left:539px;top:320px;width:598px;height:24px;background:#f0f0f0;border-bottom:1px solid #a0a0a0"></div>
<div style="left:539px;top:344px;width:598px;height:20px;background:#fff"></div>
<div style="left:539px;top:364px;width:598px;height:21px;background:#f0f0f0"></div>
<div style="left:539px;top:385px;width:598px;height:22px;background:#fff"></div>
<div style="left:570px;top:321px;width:1px;height:23px;background:#a0a0a0"></div>
<div style="left:570px;top:344px;width:1px;height:63px;background:#f0f0f0"></div>
<div style="left:602px;top:321px;width:1px;height:23px;background:#a0a0a0"></div>
<div style="left:602px;top:344px;width:1px;height:63px;background:#f0f0f0"></div>
<div style="left:634px;top:321px;width:1px;height:23px;background:#a0a0a0"></div>
<div style="left:634px;top:344px;width:1px;height:63px;background:#f0f0f0"></div>
<div style="left:666px;top:321px;width:1px;height:23px;background:#a0a0a0"></div>
<div style="left:666px;top:344px;width:1px;height:63px;background:#f0f0f0"></div>
<div style="left:731px;top:321px;width:1px;height:23px;background:#a0a0a0"></div>
<div style="left:731px;top:344px;width:1px;height:63px;background:#f0f0f0"></div>
<div style="left:813px;top:321px;width:1px;height:23px;background:#a0a0a0"></div>
<div style="left:813px;top:344px;width:1px;height:63px;background:#f0f0f0"></div>
<div style="left:890px;top:321px;width:1px;height:23px;background:#a0a0a0"></div>
<div style="left:890px;top:344px;width:1px;height:63px;background:#f0f0f0"></div>
<div style="left:1000px;top:321px;width:1px;height:23px;background:#a0a0a0"></div>
<div style="left:1000px;top:344px;width:1px;height:63px;background:#f0f0f0"></div>
<div style="left:1136px;top:321px;width:1px;height:23px;background:#a0a0a0"></div>
<div style="left:1136px;top:344px;width:1px;height:63px;background:#f0f0f0"></div>
<span class="t" style="left:550px;top:325px;font-size:12px;color:#000;">X</span>
<span class="t" style="left:582px;top:325px;font-size:12px;color:#000;">Y</span>
<span class="t" style="left:610px;top:325px;font-size:12px;color:#000;letter-spacing:-0.333px;">yEr</span>
<span class="t" style="left:647px;top:325px;font-size:12px;color:#000;">L</span>
<span class="t" style="left:670px;top:325px;font-size:12px;color:#000;letter-spacing:0.273px;">Column</span>
<span class="t" style="left:735px;top:325px;font-size:12px;color:#000;letter-spacing:0.106px;">Long Name</span>
<span class="t" style="left:817px;top:325px;font-size:12px;color:#000;letter-spacing:0.123px;">Comments</span>
<span class="t" style="left:894px;top:325px;font-size:12px;color:#000;letter-spacing:-0.042px;">Sampling Interval</span>
<span class="t" style="right:146px;top:325px;font-size:12px;color:#000;">Position</span>
<div style="left:547px;top:347px;width:13px;height:13px;background:#fff;border:1px solid #333"></div>
<div style="left:579px;top:347px;width:13px;height:13px;background:#fff;border:1px solid #333"></div>
<div style="left:611px;top:347px;width:13px;height:13px;background:#fff;border:1px solid #333"></div>
<div style="left:643px;top:347px;width:13px;height:13px;background:#fff;border:1px solid #333"></div>
<span class="t" style="right:145px;top:347px;font-size:12px;color:#000;">0</span>
<div style="left:547px;top:368px;width:13px;height:13px;background:#fff;border:1px solid #333"></div>
<div style="left:579px;top:368px;width:13px;height:13px;background:#fff;border:1px solid #333"></div>
<div style="left:611px;top:368px;width:13px;height:13px;background:#fff;border:1px solid #333"></div>
<div style="left:643px;top:368px;width:13px;height:13px;background:#fff;border:1px solid #333"></div>
<span class="t" style="right:145px;top:368px;font-size:12px;color:#000;">1</span>
<div style="left:547px;top:389px;width:13px;height:13px;background:#fff;border:1px solid #333"></div>
<div style="left:579px;top:389px;width:13px;height:13px;background:#fff;border:1px solid #333"></div>
<div style="left:611px;top:389px;width:13px;height:13px;background:#fff;border:1px solid #333"></div>
<div style="left:643px;top:389px;width:13px;height:13px;background:#fff;border:1px solid #333"></div>
<span class="t" style="right:145px;top:389px;font-size:12px;color:#000;">2</span>
<span class="t" style="left:670px;top:347px;font-size:12px;color:#000;letter-spacing:0.089px;">&lt;autoX&gt;</span>
<span class="t" style="left:735px;top:347px;font-size:12px;color:#000;letter-spacing:-0.003px;">From/Step=</span>
<span class="t" style="left:670px;top:368px;font-size:12px;color:#000;">A</span>
<span class="t" style="left:670px;top:389px;font-size:12px;color:#000;">B</span>
<svg style="left:332px;top:265px" width="16" height="14" viewBox="0 0 16 14"><defs><linearGradient id="dg" x1="0" y1="0" x2="0.3" y2="1"><stop offset="0" stop-color="#5a86c4"/><stop offset="1" stop-color="#3fae48"/></linearGradient></defs><rect x="0.5" y="0.5" width="14.5" height="12.5" rx="0.8" fill="#fff" stroke="#b3b8c0" stroke-width="1"/><rect x="1" y="1" width="13.5" height="1" fill="#d7dbe0"/><rect x="2" y="3" width="5.2" height="8" fill="url(#dg)"/><rect x="8.8" y="3" width="2" height="8" fill="#e4e4e4"/><rect x="12" y="3" width="2.2" height="4" fill="url(#dg)" opacity="0.8"/></svg>
<div style="left:1085px;top:297px;width:17px;height:17px;background:#ebebeb"></div>
<svg style="left:1086px;top:298px" width="15" height="15" viewBox="0 0 15 15"><path d="M0.5 2 H10 V0.3 L14.5 3.5 L10 6.7 V5 H0.5 Z M14.5 9.5 H5 V7.8 L0.5 11 L5 14.2 V12.5 H14.5 Z" fill="#000"/></svg>
<svg style="left:1120px;top:299px" width="10" height="12" viewBox="0 0 10 12"><path d="M1 5.5 L5 1.5 L9 5.5 M1 10.5 L5 6.5 L9 10.5" fill="none" stroke="#0000ff" stroke-width="1.3"/></svg>
<svg style="left:1120px;top:485px" width="10" height="12" viewBox="0 0 10 12"><path d="M1 1.5 L5 5.5 L9 1.5 M1 6.5 L5 10.5 L9 6.5" fill="none" stroke="#0000ff" stroke-width="1.3"/></svg>
<span class="t" style="left:1071px;top:265px;font-size:13px;color:#000;">?</span>
<svg style="left:1114px;top:266px" width="12" height="12" viewBox="0 0 12 12"><path d="M0.5 0.5 L11.5 11.5 M11.5 0.5 L0.5 11.5" stroke="#000" stroke-width="1.1" fill="none"/></svg>
</body></html>
